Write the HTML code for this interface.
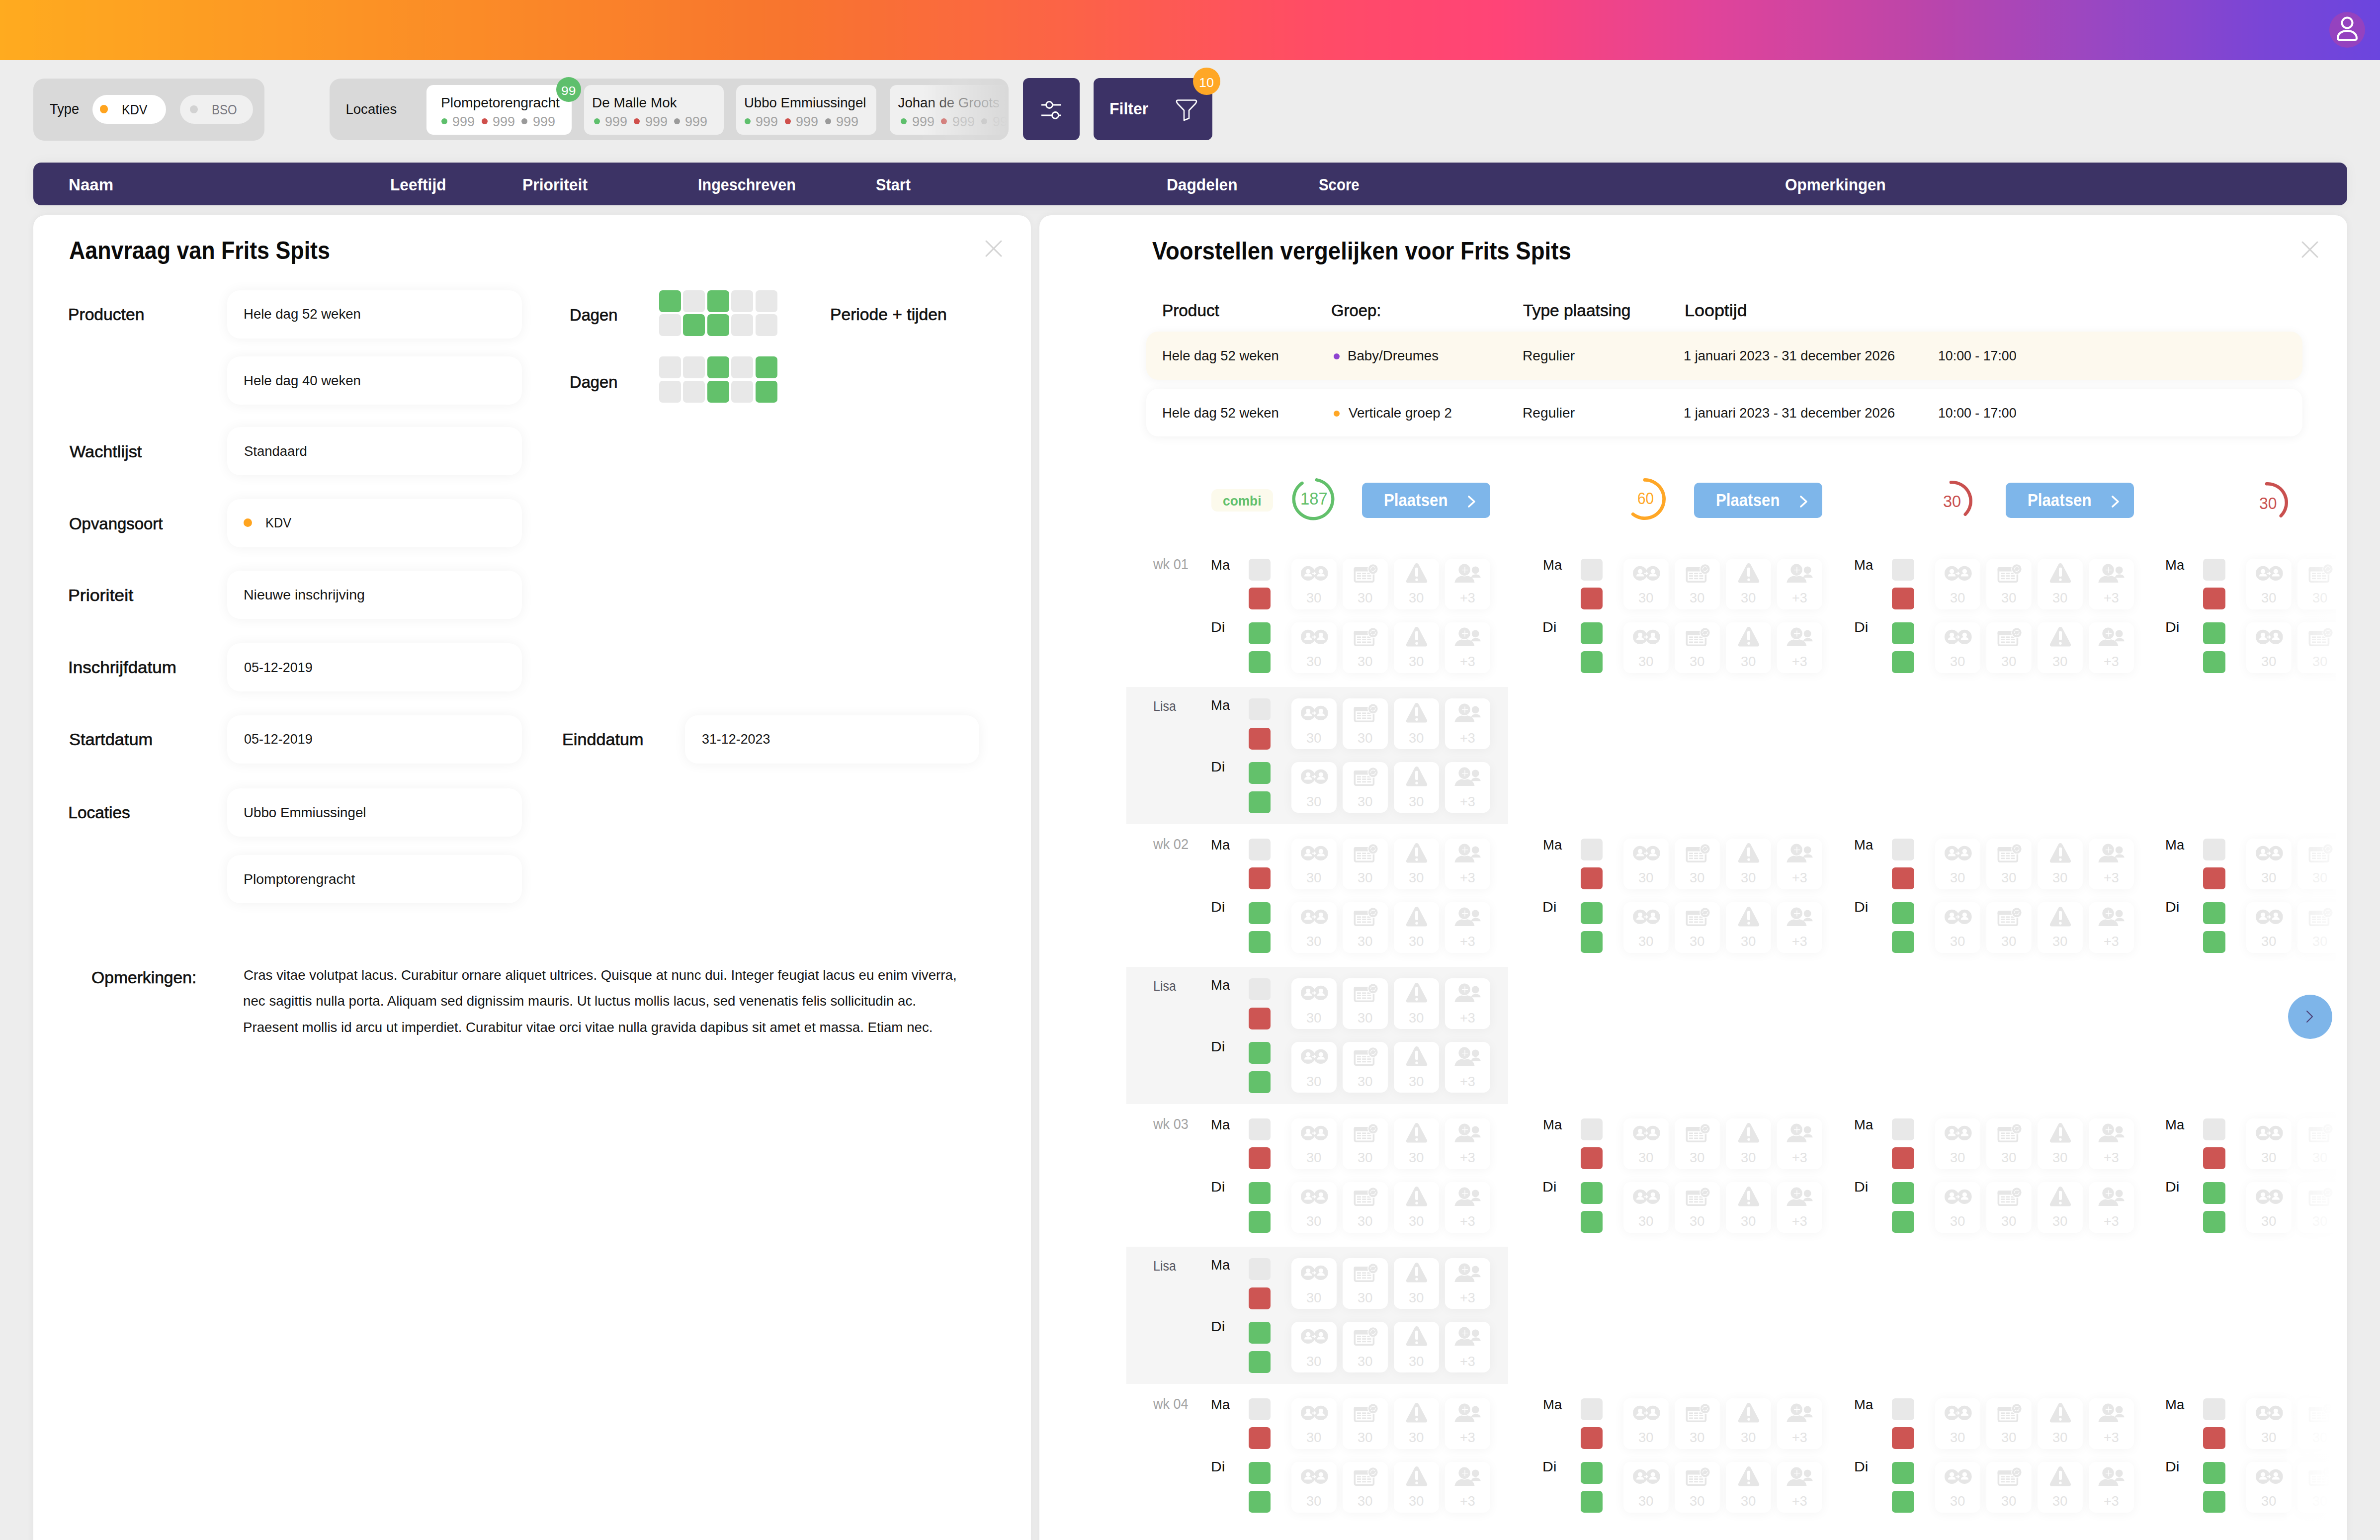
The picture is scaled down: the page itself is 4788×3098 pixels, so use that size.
<!DOCTYPE html><html><head><meta charset="utf-8"><style>
html,body{margin:0;padding:0;}
body{width:4788px;height:3098px;position:relative;overflow:hidden;background:#EDEDED;font-family:"Liberation Sans",sans-serif;}
.t{position:absolute;white-space:nowrap;transform-origin:0 0;}
.b{position:absolute;}
svg{position:absolute;overflow:visible;}
</style></head><body>
<div class="b" style="left:0.0px;top:0.0px;width:4788.0px;height:121.0px;background:linear-gradient(90deg,#FFAB1F 0%,#FB8B27 20%,#F8752E 33%,#FC6347 45%,#FF4C65 55%,#FF4477 63%,#E0449A 72%,#BF45A8 80%,#9A47C2 88%,#7A45D6 95%,#6B45DE 100%);border-radius:0px;"></div>
<div class="b" style="left:4686.0px;top:24.0px;width:72.0px;height:72.0px;background:#9542BF;border-radius:36.0px;"></div>
<svg style="left:4698px;top:30px" width="48" height="56" viewBox="0 0 48 56"><circle cx="24" cy="16" r="10.5" fill="none" stroke="#fff" stroke-width="4"/><path d="M5,47 C5,37 14,32 24,32 C34,32 43,37 43,47 C43,49 42,50 40,50 L8,50 C6,50 5,49 5,47 Z" fill="none" stroke="#fff" stroke-width="4"/></svg>
<div class="b" style="left:67.0px;top:158.0px;width:465.0px;height:125.0px;background:#D9D9D9;border-radius:22px;"></div>
<div class="t" style="left:100.2px;top:205.4px;font-size:29.07px;line-height:29.07px;color:#111;transform:scaleX(0.9380);">Type</div>
<div class="b" style="left:186.0px;top:190.5px;width:148.0px;height:58.5px;background:#FFFFFF;border-radius:30px;"></div>
<div class="b" style="left:200.8px;top:211.2px;width:16.5px;height:16.5px;background:#FFA41F;border-radius:8.25px;"></div>
<div class="t" style="left:245.0px;top:205.8px;font-size:28.34px;line-height:28.34px;color:#111;transform:scaleX(0.8843);">KDV</div>
<div class="b" style="left:362.0px;top:190.5px;width:147.0px;height:58.5px;background:#F0F0F0;border-radius:30px;"></div>
<div class="b" style="left:382.0px;top:211.5px;width:16.0px;height:16.0px;background:#D2D2D2;border-radius:8.0px;"></div>
<div class="t" style="left:426.1px;top:205.8px;font-size:28.34px;line-height:28.34px;color:#77777F;transform:scaleX(0.8443);">BSO</div>
<div class="b" style="left:663px;top:157.5px;width:1366px;height:124.5px;background:#D9D9D9;border-radius:22px;overflow:hidden">
<div class="b" style="left:195.0px;top:13.5px;width:292.0px;height:100.0px;background:#FFFFFF;border-radius:14px;"></div>
<div class="t" style="left:224.1px;top:35.1px;font-size:27.62px;line-height:27.62px;color:#111;transform:scaleX(1.0244);">Plompetorengracht</div>
<div class="b" style="left:224.6px;top:80.0px;width:12.0px;height:12.0px;background:#5EBF6C;border-radius:6.0px;"></div>
<div class="t" style="left:247.4px;top:73.1px;font-size:27.62px;line-height:27.62px;color:#A3A3A3;transform:scaleX(0.9748);">999</div>
<div class="b" style="left:305.6px;top:80.0px;width:12.0px;height:12.0px;background:#CF4F4B;border-radius:6.0px;"></div>
<div class="t" style="left:328.4px;top:73.1px;font-size:27.62px;line-height:27.62px;color:#A3A3A3;transform:scaleX(0.9748);">999</div>
<div class="b" style="left:386.3px;top:80.0px;width:12.0px;height:12.0px;background:#9A9A9A;border-radius:6.0px;"></div>
<div class="t" style="left:409.1px;top:73.1px;font-size:27.62px;line-height:27.62px;color:#A3A3A3;transform:scaleX(0.9748);">999</div>
<div class="b" style="left:512.0px;top:13.5px;width:281.0px;height:100.0px;background:#F0F0F0;border-radius:14px;"></div>
<div class="t" style="left:527.8px;top:35.1px;font-size:27.62px;line-height:27.62px;color:#111;transform:scaleX(1.0110);">De Malle Mok</div>
<div class="b" style="left:531.5px;top:80.0px;width:12.0px;height:12.0px;background:#5EBF6C;border-radius:6.0px;"></div>
<div class="t" style="left:554.3px;top:73.1px;font-size:27.62px;line-height:27.62px;color:#A3A3A3;transform:scaleX(0.9748);">999</div>
<div class="b" style="left:612.0px;top:80.0px;width:12.0px;height:12.0px;background:#CF4F4B;border-radius:6.0px;"></div>
<div class="t" style="left:634.8px;top:73.1px;font-size:27.62px;line-height:27.62px;color:#A3A3A3;transform:scaleX(0.9748);">999</div>
<div class="b" style="left:692.6px;top:80.0px;width:12.0px;height:12.0px;background:#9A9A9A;border-radius:6.0px;"></div>
<div class="t" style="left:715.4px;top:73.1px;font-size:27.62px;line-height:27.62px;color:#A3A3A3;transform:scaleX(0.9748);">999</div>
<div class="b" style="left:818.0px;top:13.5px;width:281.5px;height:100.0px;background:#F0F0F0;border-radius:14px;"></div>
<div class="t" style="left:833.9px;top:35.1px;font-size:27.62px;line-height:27.62px;color:#111;">Ubbo Emmiussingel</div>
<div class="b" style="left:834.6px;top:80.0px;width:12.0px;height:12.0px;background:#5EBF6C;border-radius:6.0px;"></div>
<div class="t" style="left:857.4px;top:73.1px;font-size:27.62px;line-height:27.62px;color:#A3A3A3;transform:scaleX(0.9748);">999</div>
<div class="b" style="left:915.5px;top:80.0px;width:12.0px;height:12.0px;background:#CF4F4B;border-radius:6.0px;"></div>
<div class="t" style="left:938.3px;top:73.1px;font-size:27.62px;line-height:27.62px;color:#A3A3A3;transform:scaleX(0.9748);">999</div>
<div class="b" style="left:996.5px;top:80.0px;width:12.0px;height:12.0px;background:#9A9A9A;border-radius:6.0px;"></div>
<div class="t" style="left:1019.3px;top:73.1px;font-size:27.62px;line-height:27.62px;color:#A3A3A3;transform:scaleX(0.9748);">999</div>
<div class="b" style="left:1127.0px;top:13.5px;width:281.0px;height:100.0px;background:#F0F0F0;border-radius:14px;"></div>
<div class="t" style="left:1143.6px;top:35.1px;font-size:27.62px;line-height:27.62px;color:#111;">Johan de Groots</div>
<div class="b" style="left:1149.0px;top:80.0px;width:12.0px;height:12.0px;background:#5EBF6C;border-radius:6.0px;"></div>
<div class="t" style="left:1171.8px;top:73.1px;font-size:27.62px;line-height:27.62px;color:#A3A3A3;transform:scaleX(0.9748);">999</div>
<div class="b" style="left:1230.0px;top:80.0px;width:12.0px;height:12.0px;background:#CF4F4B;border-radius:6.0px;"></div>
<div class="t" style="left:1252.8px;top:73.1px;font-size:27.62px;line-height:27.62px;color:#A3A3A3;transform:scaleX(0.9748);">999</div>
<div class="b" style="left:1311.0px;top:80.0px;width:12.0px;height:12.0px;background:#9A9A9A;border-radius:6.0px;"></div>
<div class="t" style="left:1333.8px;top:73.1px;font-size:27.62px;line-height:27.62px;color:#A3A3A3;transform:scaleX(0.9748);">999</div>
<div class="b" style="left:1190px;top:0;width:176px;height:124.5px;background:linear-gradient(90deg,rgba(222,222,222,0) 0%,rgba(222,222,222,0.6) 45%,rgba(217,217,217,0.9) 88%,rgba(217,217,217,1) 100%)"></div>
</div>
<div class="t" style="left:695.4px;top:206.0px;font-size:27.62px;line-height:27.62px;color:#111;">Locaties</div>
<div class="b" style="left:1119.0px;top:154.5px;width:50.0px;height:50.0px;background:#5EBF6C;border-radius:25.0px;"></div>
<div class="t" style="left:1129.3px;top:170.6px;font-size:24.71px;line-height:24.71px;color:#FFFFFF;transform:scaleX(1.0713);">99</div>
<div class="b" style="left:2057.6px;top:157.4px;width:114.2px;height:125.0px;background:#3C3266;border-radius:12px;"></div>
<svg style="left:2090px;top:200px" width="50" height="42" viewBox="0 0 50 42"><g fill="none" stroke="#fff" stroke-width="2.8"><line x1="5" y1="11" x2="45" y2="11"/><line x1="5" y1="32" x2="45" y2="32"/><circle cx="21" cy="11" r="6.5" fill="#3C3266"/><circle cx="33" cy="32" r="6.5" fill="#3C3266"/></g></svg>
<div class="b" style="left:2199.7px;top:157.0px;width:239.1px;height:125.0px;background:#3C3266;border-radius:12px;"></div>
<div class="t" style="left:2231.9px;top:201.7px;font-size:33.43px;line-height:33.43px;color:#FFFFFF;font-weight:700;transform:scaleX(0.9562);">Filter</div>
<svg style="left:2362px;top:198px" width="50" height="48" viewBox="0 0 50 48"><path d="M5,6 C5,4 6,3.5 8,3.5 L42,3.5 C44,3.5 45,4 45,6 C45,8 44,9 43,10.5 L30,24 L30,40 L20,44 L20,24 L7,10.5 C6,9 5,8 5,6 Z" fill="none" stroke="#fff" stroke-width="2.6" stroke-linejoin="round"/></svg>
<div class="b" style="left:2400.1px;top:135.5px;width:55.0px;height:55.0px;background:#FFA726;border-radius:27.5px;"></div>
<div class="t" style="left:2412.0px;top:152.8px;font-size:26.16px;line-height:26.16px;color:#FFFFFF;transform:scaleX(1.0320);">10</div>
<div class="b" style="left:67.0px;top:327.0px;width:4655.0px;height:86.0px;background:#3C3365;border-radius:16px;box-shadow:0 0 24px rgba(0,0,0,0.05);"></div>
<div class="t" style="left:138.3px;top:354.7px;font-size:33.43px;line-height:33.43px;color:#FFFFFF;font-weight:700;transform:scaleX(0.9894);">Naam</div>
<div class="t" style="left:784.6px;top:354.7px;font-size:33.43px;line-height:33.43px;color:#FFFFFF;font-weight:700;transform:scaleX(0.9467);">Leeftijd</div>
<div class="t" style="left:1050.9px;top:354.7px;font-size:33.43px;line-height:33.43px;color:#FFFFFF;font-weight:700;transform:scaleX(0.9534);">Prioriteit</div>
<div class="t" style="left:1404.0px;top:354.7px;font-size:33.43px;line-height:33.43px;color:#FFFFFF;font-weight:700;transform:scaleX(0.9135);">Ingeschreven</div>
<div class="t" style="left:1761.6px;top:354.7px;font-size:33.43px;line-height:33.43px;color:#FFFFFF;font-weight:700;transform:scaleX(0.9181);">Start</div>
<div class="t" style="left:2346.9px;top:354.7px;font-size:33.43px;line-height:33.43px;color:#FFFFFF;font-weight:700;transform:scaleX(0.9476);">Dagdelen</div>
<div class="t" style="left:2653.1px;top:354.7px;font-size:33.43px;line-height:33.43px;color:#FFFFFF;font-weight:700;transform:scaleX(0.8798);">Score</div>
<div class="t" style="left:3590.7px;top:354.7px;font-size:33.43px;line-height:33.43px;color:#FFFFFF;font-weight:700;transform:scaleX(0.9415);">Opmerkingen</div>
<div class="b" style="left:67.0px;top:433.0px;width:2007.0px;height:2867.0px;background:#FFFFFF;border-radius:24px;box-shadow:0 0 16px rgba(0,0,0,0.05);"></div>
<div class="b" style="left:2091.0px;top:433.0px;width:2631.0px;height:2867.0px;background:#FFFFFF;border-radius:24px;box-shadow:0 0 16px rgba(0,0,0,0.05);"></div>
<div class="t" style="left:138.7px;top:479.4px;font-size:50.29px;line-height:50.29px;color:#0A0A0A;font-weight:700;transform:scaleX(0.8902);">Aanvraag van Frits Spits</div>
<svg style="left:1981px;top:481.5px" width="36" height="36" viewBox="0 0 36 36"><path d="M3,3 L33,33 M33,3 L3,33" stroke="#D4D4D4" stroke-width="3" stroke-linecap="round"/></svg>
<div class="t" style="left:137.3px;top:616.4px;font-size:33.43px;line-height:33.43px;color:#111111;transform:scaleX(1.0064);-webkit-text-stroke:0.7px #111111;">Producten</div>
<div class="b" style="left:457.0px;top:583.5px;width:593.0px;height:97.0px;background:#FFFFFF;border-radius:26px;box-shadow:0 1px 26px rgba(0,0,0,0.055);"></div>
<div class="t" style="left:489.8px;top:619.1px;font-size:26.74px;line-height:26.74px;color:#151515;transform:scaleX(1.0303);">Hele dag 52 weken</div>
<div class="b" style="left:457.0px;top:717.0px;width:593.0px;height:97.0px;background:#FFFFFF;border-radius:26px;box-shadow:0 1px 26px rgba(0,0,0,0.055);"></div>
<div class="t" style="left:489.8px;top:752.6px;font-size:26.74px;line-height:26.74px;color:#151515;transform:scaleX(1.0303);">Hele dag 40 weken</div>
<div class="t" style="left:1146.4px;top:616.7px;font-size:33.43px;line-height:33.43px;color:#111111;transform:scaleX(0.9790);-webkit-text-stroke:0.7px #111111;">Dagen</div>
<div class="t" style="left:1146.4px;top:751.7px;font-size:33.43px;line-height:33.43px;color:#111111;transform:scaleX(0.9790);-webkit-text-stroke:0.7px #111111;">Dagen</div>
<div class="b" style="left:1325.6px;top:583.5px;width:44.0px;height:44.0px;background:#63C16B;border-radius:7px;"></div>
<div class="b" style="left:1374.1px;top:583.5px;width:44.0px;height:44.0px;background:#E8E8E8;border-radius:7px;"></div>
<div class="b" style="left:1422.6px;top:583.5px;width:44.0px;height:44.0px;background:#63C16B;border-radius:7px;"></div>
<div class="b" style="left:1471.1px;top:583.5px;width:44.0px;height:44.0px;background:#E8E8E8;border-radius:7px;"></div>
<div class="b" style="left:1519.6px;top:583.5px;width:44.0px;height:44.0px;background:#E8E8E8;border-radius:7px;"></div>
<div class="b" style="left:1325.6px;top:632.0px;width:44.0px;height:44.0px;background:#E8E8E8;border-radius:7px;"></div>
<div class="b" style="left:1374.1px;top:632.0px;width:44.0px;height:44.0px;background:#63C16B;border-radius:7px;"></div>
<div class="b" style="left:1422.6px;top:632.0px;width:44.0px;height:44.0px;background:#63C16B;border-radius:7px;"></div>
<div class="b" style="left:1471.1px;top:632.0px;width:44.0px;height:44.0px;background:#E8E8E8;border-radius:7px;"></div>
<div class="b" style="left:1519.6px;top:632.0px;width:44.0px;height:44.0px;background:#E8E8E8;border-radius:7px;"></div>
<div class="b" style="left:1325.6px;top:717.4px;width:44.0px;height:44.0px;background:#E8E8E8;border-radius:7px;"></div>
<div class="b" style="left:1374.1px;top:717.4px;width:44.0px;height:44.0px;background:#E8E8E8;border-radius:7px;"></div>
<div class="b" style="left:1422.6px;top:717.4px;width:44.0px;height:44.0px;background:#63C16B;border-radius:7px;"></div>
<div class="b" style="left:1471.1px;top:717.4px;width:44.0px;height:44.0px;background:#E8E8E8;border-radius:7px;"></div>
<div class="b" style="left:1519.6px;top:717.4px;width:44.0px;height:44.0px;background:#63C16B;border-radius:7px;"></div>
<div class="b" style="left:1325.6px;top:765.9px;width:44.0px;height:44.0px;background:#E8E8E8;border-radius:7px;"></div>
<div class="b" style="left:1374.1px;top:765.9px;width:44.0px;height:44.0px;background:#E8E8E8;border-radius:7px;"></div>
<div class="b" style="left:1422.6px;top:765.9px;width:44.0px;height:44.0px;background:#63C16B;border-radius:7px;"></div>
<div class="b" style="left:1471.1px;top:765.9px;width:44.0px;height:44.0px;background:#E8E8E8;border-radius:7px;"></div>
<div class="b" style="left:1519.6px;top:765.9px;width:44.0px;height:44.0px;background:#63C16B;border-radius:7px;"></div>
<div class="t" style="left:1669.9px;top:616.4px;font-size:33.43px;line-height:33.43px;color:#111111;transform:scaleX(1.0066);-webkit-text-stroke:0.7px #111111;">Periode + tijden</div>
<div class="t" style="left:139.8px;top:892.1px;font-size:33.43px;line-height:33.43px;color:#111111;transform:scaleX(1.0254);-webkit-text-stroke:0.7px #111111;">Wachtlijst</div>
<div class="b" style="left:457.0px;top:859.0px;width:593.0px;height:97.0px;background:#FFFFFF;border-radius:26px;box-shadow:0 1px 26px rgba(0,0,0,0.055);"></div>
<div class="t" style="left:490.8px;top:894.6px;font-size:26.74px;line-height:26.74px;color:#151515;transform:scaleX(1.0281);">Standaard</div>
<div class="t" style="left:138.5px;top:1036.7px;font-size:33.43px;line-height:33.43px;color:#111111;transform:scaleX(0.9846);-webkit-text-stroke:0.7px #111111;">Opvangsoort</div>
<div class="b" style="left:457.0px;top:1003.6px;width:593.0px;height:97.0px;background:#FFFFFF;border-radius:26px;box-shadow:0 1px 26px rgba(0,0,0,0.055);"></div>
<div class="b" style="left:490.2px;top:1042.5px;width:17.0px;height:17.0px;background:#FFA41F;border-radius:8.5px;"></div>
<div class="t" style="left:534.0px;top:1039.4px;font-size:26.74px;line-height:26.74px;color:#151515;transform:scaleX(0.9466);">KDV</div>
<div class="t" style="left:137.1px;top:1181.2px;font-size:33.43px;line-height:33.43px;color:#111111;transform:scaleX(1.0695);-webkit-text-stroke:0.7px #111111;">Prioriteit</div>
<div class="b" style="left:457.0px;top:1148.0px;width:593.0px;height:97.0px;background:#FFFFFF;border-radius:26px;box-shadow:0 1px 26px rgba(0,0,0,0.055);"></div>
<div class="t" style="left:489.7px;top:1183.6px;font-size:26.74px;line-height:26.74px;color:#151515;transform:scaleX(1.0658);">Nieuwe inschrijving</div>
<div class="t" style="left:136.8px;top:1326.2px;font-size:33.43px;line-height:33.43px;color:#111111;transform:scaleX(1.0477);-webkit-text-stroke:0.7px #111111;">Inschrijfdatum</div>
<div class="b" style="left:457.0px;top:1294.0px;width:593.0px;height:97.0px;background:#FFFFFF;border-radius:26px;box-shadow:0 1px 26px rgba(0,0,0,0.055);"></div>
<div class="t" style="left:490.9px;top:1329.6px;font-size:26.74px;line-height:26.74px;color:#151515;transform:scaleX(1.0065);">05-12-2019</div>
<div class="t" style="left:138.5px;top:1470.7px;font-size:33.43px;line-height:33.43px;color:#111111;transform:scaleX(1.0290);-webkit-text-stroke:0.7px #111111;">Startdatum</div>
<div class="b" style="left:457.0px;top:1438.6px;width:593.0px;height:97.0px;background:#FFFFFF;border-radius:26px;box-shadow:0 1px 26px rgba(0,0,0,0.055);"></div>
<div class="t" style="left:490.9px;top:1474.2px;font-size:26.74px;line-height:26.74px;color:#151515;transform:scaleX(1.0065);">05-12-2019</div>
<div class="t" style="left:1131.3px;top:1470.7px;font-size:33.43px;line-height:33.43px;color:#111111;transform:scaleX(1.0225);-webkit-text-stroke:0.7px #111111;">Einddatum</div>
<div class="b" style="left:1378.0px;top:1438.6px;width:592.0px;height:97.0px;background:#FFFFFF;border-radius:26px;box-shadow:0 1px 26px rgba(0,0,0,0.055);"></div>
<div class="t" style="left:1412.1px;top:1474.2px;font-size:26.74px;line-height:26.74px;color:#151515;transform:scaleX(1.0045);">31-12-2023</div>
<div class="t" style="left:137.3px;top:1617.7px;font-size:33.43px;line-height:33.43px;color:#111111;-webkit-text-stroke:0.7px #111111;">Locaties</div>
<div class="b" style="left:457.0px;top:1586.0px;width:593.0px;height:97.0px;background:#FFFFFF;border-radius:26px;box-shadow:0 1px 26px rgba(0,0,0,0.055);"></div>
<div class="t" style="left:489.9px;top:1621.6px;font-size:26.74px;line-height:26.74px;color:#151515;transform:scaleX(1.0367);">Ubbo Emmiussingel</div>
<div class="b" style="left:457.0px;top:1720.0px;width:593.0px;height:97.0px;background:#FFFFFF;border-radius:26px;box-shadow:0 1px 26px rgba(0,0,0,0.055);"></div>
<div class="t" style="left:489.7px;top:1755.6px;font-size:26.74px;line-height:26.74px;color:#151515;transform:scaleX(1.0635);">Plomptorengracht</div>
<div class="t" style="left:183.5px;top:1949.6px;font-size:33.43px;line-height:33.43px;color:#111111;transform:scaleX(1.0068);-webkit-text-stroke:0.7px #111111;">Opmerkingen:</div>
<div class="t" style="left:489.6px;top:1946.6px;font-size:28.49px;line-height:28.49px;color:#151515;transform:scaleX(0.9722);">Cras vitae volutpat lacus. Curabitur ornare aliquet ultrices. Quisque at nunc dui. Integer feugiat lacus eu enim viverra,</div>
<div class="t" style="left:489.2px;top:1998.9px;font-size:28.49px;line-height:28.49px;color:#151515;transform:scaleX(0.9730);">nec sagittis nulla porta. Aliquam sed dignissim mauris. Ut luctus mollis lacus, sed venenatis felis sollicitudin ac.</div>
<div class="t" style="left:488.8px;top:2051.6px;font-size:28.49px;line-height:28.49px;color:#151515;transform:scaleX(0.9727);">Praesent mollis id arcu ut imperdiet. Curabitur vitae orci vitae nulla gravida dapibus sit amet et massa. Etiam nec.</div>
<div class="t" style="left:2317.7px;top:480.4px;font-size:50.29px;line-height:50.29px;color:#0A0A0A;font-weight:700;transform:scaleX(0.9067);">Voorstellen vergelijken voor Frits Spits</div>
<svg style="left:4629px;top:484px" width="36" height="36" viewBox="0 0 36 36"><path d="M3,3 L33,33 M33,3 L3,33" stroke="#D4D4D4" stroke-width="3" stroke-linecap="round"/></svg>
<div class="t" style="left:2337.6px;top:608.6px;font-size:32.41px;line-height:32.41px;color:#111111;transform:scaleX(1.0284);-webkit-text-stroke:0.6px #111111;">Product</div>
<div class="t" style="left:2678.1px;top:608.6px;font-size:32.41px;line-height:32.41px;color:#111111;transform:scaleX(1.0122);-webkit-text-stroke:0.6px #111111;">Groep:</div>
<div class="t" style="left:3064.3px;top:608.6px;font-size:32.41px;line-height:32.41px;color:#111111;transform:scaleX(1.0360);-webkit-text-stroke:0.6px #111111;">Type plaatsing</div>
<div class="t" style="left:3389.1px;top:608.6px;font-size:32.41px;line-height:32.41px;color:#111111;transform:scaleX(1.1074);-webkit-text-stroke:0.6px #111111;">Looptijd</div>
<div class="b" style="left:2305.8px;top:667.0px;width:2326.2px;height:96.6px;background:#FDF9EE;border-radius:24px;box-shadow:0 2px 20px rgba(0,0,0,0.05);"></div>
<div class="b" style="left:2305.8px;top:781.5px;width:2326.2px;height:96.8px;background:#FFFFFF;border-radius:24px;box-shadow:0 2px 20px rgba(0,0,0,0.06);"></div>
<div class="t" style="left:2337.8px;top:702.3px;font-size:27.62px;line-height:27.62px;color:#151515;transform:scaleX(0.9930);">Hele dag 52 weken</div>
<div class="b" style="left:2683.4px;top:711.2px;width:12.0px;height:12.0px;background:#8E44D0;border-radius:6.0px;"></div>
<div class="t" style="left:2711.3px;top:702.3px;font-size:27.62px;line-height:27.62px;color:#151515;transform:scaleX(1.0022);">Baby/Dreumes</div>
<div class="t" style="left:3062.7px;top:702.3px;font-size:27.62px;line-height:27.62px;color:#151515;transform:scaleX(1.0215);">Regulier</div>
<div class="t" style="left:3386.5px;top:702.3px;font-size:27.62px;line-height:27.62px;color:#151515;transform:scaleX(0.9891);">1 januari 2023 - 31 december 2026</div>
<div class="t" style="left:3898.5px;top:702.3px;font-size:27.62px;line-height:27.62px;color:#151515;transform:scaleX(0.9683);">10:00 - 17:00</div>
<div class="t" style="left:2337.8px;top:816.6px;font-size:27.62px;line-height:27.62px;color:#151515;transform:scaleX(0.9930);">Hele dag 52 weken</div>
<div class="b" style="left:2683.4px;top:825.5px;width:12.0px;height:12.0px;background:#FFA726;border-radius:6.0px;"></div>
<div class="t" style="left:2713.4px;top:816.6px;font-size:27.62px;line-height:27.62px;color:#151515;transform:scaleX(1.0032);">Verticale groep 2</div>
<div class="t" style="left:3062.7px;top:816.6px;font-size:27.62px;line-height:27.62px;color:#151515;transform:scaleX(1.0215);">Regulier</div>
<div class="t" style="left:3386.5px;top:816.6px;font-size:27.62px;line-height:27.62px;color:#151515;transform:scaleX(0.9891);">1 januari 2023 - 31 december 2026</div>
<div class="t" style="left:3898.5px;top:816.6px;font-size:27.62px;line-height:27.62px;color:#151515;transform:scaleX(0.9683);">10:00 - 17:00</div>
<div class="b" style="left:2436.5px;top:984.4px;width:124.5px;height:44.2px;background:#FCFAEC;border-radius:12px;"></div>
<div class="t" style="left:2460.3px;top:992.5px;font-size:28.38px;line-height:28.38px;color:#62C06B;font-weight:700;transform:scaleX(0.9273);">combi</div>
<svg style="left:2582.2px;top:943.5px" width="120" height="120" viewBox="2582.2 943.5 120 120"><path d="M2649.02,964.85 A39.25,39.25 0 1 1 2619.69,971.35" fill="none" stroke="#62C06B" stroke-width="6.5" stroke-linecap="round"/></svg>
<div class="t" style="left:2616.3px;top:985.8px;font-size:34.16px;line-height:34.16px;color:#62C06B;transform:scaleX(0.9619);">187</div>
<svg style="left:3249.4px;top:943.5px" width="120" height="120" viewBox="3249.4 943.5 120 120"><path d="M3309.40,964.90 A38.60,38.60 0 1 1 3285.64,1033.92" fill="none" stroke="#FFA726" stroke-width="6.8" stroke-linecap="round"/></svg>
<div class="t" style="left:3293.8px;top:985.9px;font-size:33.72px;line-height:33.72px;color:#FFA726;transform:scaleX(0.8824);">60</div>
<svg style="left:3867.0px;top:947.5px" width="120" height="120" viewBox="3867.0 947.5 120 120"><path d="M3925.02,969.80 A37.75,37.75 0 0 1 3953.69,1034.19" fill="none" stroke="#C9504F" stroke-width="6.5" stroke-linecap="round"/></svg>
<div class="t" style="left:3909.4px;top:991.4px;font-size:34.01px;line-height:34.01px;color:#C9504F;transform:scaleX(0.9556);">30</div>
<svg style="left:4502.0px;top:950.5px" width="120" height="120" viewBox="4502.0 950.5 120 120"><path d="M4560.02,972.80 A37.75,37.75 0 0 1 4588.69,1037.19" fill="none" stroke="#C9504F" stroke-width="6.5" stroke-linecap="round"/></svg>
<div class="t" style="left:4544.5px;top:995.2px;font-size:34.01px;line-height:34.01px;color:#C9504F;transform:scaleX(0.9414);">30</div>
<div class="b" style="left:2739.8px;top:970.6px;width:258.4px;height:71.4px;background:#7EB6EA;border-radius:10px;"></div>
<div class="t" style="left:2783.7px;top:988.7px;font-size:34.16px;line-height:34.16px;color:#FFFFFF;font-weight:700;transform:scaleX(0.9143);">Plaatsen</div>
<svg style="left:2949.8px;top:994px" width="24" height="30" viewBox="0 0 24 30"><path d="M5,5 L16,15 L5,25" fill="none" stroke="#fff" stroke-width="3.6" stroke-linecap="round" stroke-linejoin="round"/></svg>
<div class="b" style="left:3407.8px;top:970.6px;width:258.4px;height:71.4px;background:#7EB6EA;border-radius:10px;"></div>
<div class="t" style="left:3451.7px;top:988.7px;font-size:34.16px;line-height:34.16px;color:#FFFFFF;font-weight:700;transform:scaleX(0.9143);">Plaatsen</div>
<svg style="left:3617.8px;top:994px" width="24" height="30" viewBox="0 0 24 30"><path d="M5,5 L16,15 L5,25" fill="none" stroke="#fff" stroke-width="3.6" stroke-linecap="round" stroke-linejoin="round"/></svg>
<div class="b" style="left:4034.7px;top:970.6px;width:258.4px;height:71.4px;background:#7EB6EA;border-radius:10px;"></div>
<div class="t" style="left:4078.6px;top:988.7px;font-size:34.16px;line-height:34.16px;color:#FFFFFF;font-weight:700;transform:scaleX(0.9143);">Plaatsen</div>
<svg style="left:4244.7px;top:994px" width="24" height="30" viewBox="0 0 24 30"><path d="M5,5 L16,15 L5,25" fill="none" stroke="#fff" stroke-width="3.6" stroke-linecap="round" stroke-linejoin="round"/></svg>
<svg width="0" height="0" style="left:0;top:0"><defs>
<symbol id="i1" viewBox="0 0 91.4 102">
 <circle cx="33.6" cy="29.4" r="14.6" fill="#E6E6E6"/><circle cx="59.1" cy="29.4" r="14.6" fill="#E6E6E6"/>
 <circle cx="33.6" cy="25.3" r="4.6" fill="#fff"/><path d="M26,35.4 C26,31.5 29,29.8 33.6,29.8 C38.2,29.8 41.2,31.5 41.2,35.4 Z" fill="#fff"/>
 <circle cx="59.4" cy="25.3" r="4.6" fill="#fff"/><path d="M51.8,35.4 C51.8,31.5 54.8,29.8 59.4,29.8 C64,29.8 67,31.5 67,35.4 Z" fill="#fff"/>
 <path d="M41.5,29.5 L47.5,29.5 M45.3,26.3 L48.5,29.5 L45.3,32.7" stroke="#fff" stroke-width="1.8" fill="none"/>
</symbol>
<symbol id="i2" viewBox="0 0 91.4 102">
 <rect x="24.4" y="18.9" width="38" height="27.4" rx="3" fill="none" stroke="#E6E6E6" stroke-width="3.6"/>
 <rect x="22.6" y="17.1" width="41.6" height="8.5" rx="3" fill="#E6E6E6"/>
 <g fill="#E6E6E6"><rect x="29" y="28.4" width="8" height="2.7"/><rect x="39.2" y="28.4" width="8" height="2.7"/><rect x="49.4" y="28.4" width="8" height="2.7"/>
 <rect x="29" y="33.2" width="8" height="2.7"/><rect x="39.2" y="33.2" width="8" height="2.7"/><rect x="49.4" y="33.2" width="8" height="2.7"/>
 <rect x="29" y="38.5" width="8" height="2.7"/><rect x="39.2" y="38.5" width="8" height="2.7"/><rect x="49.4" y="38.5" width="8" height="2.7"/></g>
 <circle cx="61.2" cy="20.7" r="10.2" fill="#E6E6E6" stroke="#fff" stroke-width="1.5"/>
 <path d="M56.5,21.5 A5,5 0 0 1 65,17.5 M65.9,19.9 A5,5 0 0 1 57.4,23.9" fill="none" stroke="#fff" stroke-width="1.3"/>
</symbol>
<symbol id="i3" viewBox="0 0 91.4 102">
 <path d="M46,9 C48,9 49.2,10.2 50.2,12 L66.5,43 C68.2,46.3 66.6,48.6 63,48.6 L29,48.6 C25.4,48.6 23.8,46.3 25.5,43 L41.8,12 C42.8,10.2 44,9 46,9 Z" fill="#E6E6E6"/>
 <rect x="43" y="17.8" width="6" height="18.2" rx="2" fill="#fff"/><circle cx="46" cy="42.2" r="2.7" fill="#fff"/>
</symbol>
<symbol id="i4" viewBox="0 0 91.4 102">
 <circle cx="61.2" cy="22.8" r="7.4" fill="#E6E6E6"/><path d="M52.5,38.2 C53.5,33.5 57,31.5 62,31.5 C67,31.5 70.8,33.5 71.8,38.2 Z" fill="#E6E6E6"/>
 <path d="M19.4,48.1 C20.8,38.5 29,33.7 39.5,33.7 C50,33.7 58.2,38.5 59.5,48.1 Z" fill="#E6E6E6"/>
 <circle cx="39.1" cy="22.2" r="12.5" fill="#E6E6E6" stroke="#fff" stroke-width="1.6"/>
 <path d="M40,16.6 L40,28.6 M34,22.6 L46,22.6" stroke="#fff" stroke-width="1.4"/>
</symbol>
</defs></svg>
<div class="b" style="left:2091px;top:1050px;width:2609px;height:2100px;overflow:hidden">
<div class="t" style="left:229.0px;top:71.4px;font-size:29.07px;line-height:29.07px;color:#A3A3A3;transform:scaleX(0.9348);">wk 01</div>
<div class="t" style="left:344.8px;top:72.1px;font-size:28.20px;line-height:28.20px;color:#111;transform:scaleX(0.9746);">Ma</div>
<div class="t" style="left:344.6px;top:196.6px;font-size:28.20px;line-height:28.20px;color:#111;transform:scaleX(1.0706);">Di</div>
<div class="b" style="left:420.8px;top:73.5px;width:44.4px;height:44.4px;background:#E8E8E8;border-radius:7px;"></div>
<div class="b" style="left:420.8px;top:132.0px;width:44.4px;height:44.4px;background:#CD5553;border-radius:7px;"></div>
<div class="b" style="left:420.8px;top:201.5px;width:44.4px;height:44.4px;background:#63C16B;border-radius:7px;"></div>
<div class="b" style="left:420.8px;top:260.0px;width:44.4px;height:44.4px;background:#63C16B;border-radius:7px;"></div>
<div class="b" style="left:506.9px;top:73.5px;width:91.4px;height:102.0px;background:#FFFFFF;border-radius:14px;box-shadow:0 2px 22px rgba(0,0,0,0.045);"></div>
<svg style="left:506.9px;top:73.5px" width="91.4" height="102"><use href="#i1"/></svg>
<div class="t" style="left:537.4px;top:138.1px;font-size:28.20px;line-height:28.20px;color:#E3E3E3;transform:scaleX(0.9650);">30</div>
<div class="b" style="left:609.9px;top:73.5px;width:91.4px;height:102.0px;background:#FFFFFF;border-radius:14px;box-shadow:0 2px 22px rgba(0,0,0,0.045);"></div>
<svg style="left:609.9px;top:73.5px" width="91.4" height="102"><use href="#i2"/></svg>
<div class="t" style="left:640.4px;top:138.1px;font-size:28.20px;line-height:28.20px;color:#E3E3E3;transform:scaleX(0.9650);">30</div>
<div class="b" style="left:712.9px;top:73.5px;width:91.4px;height:102.0px;background:#FFFFFF;border-radius:14px;box-shadow:0 2px 22px rgba(0,0,0,0.045);"></div>
<svg style="left:712.9px;top:73.5px" width="91.4" height="102"><use href="#i3"/></svg>
<div class="t" style="left:743.4px;top:138.1px;font-size:28.20px;line-height:28.20px;color:#E3E3E3;transform:scaleX(0.9650);">30</div>
<div class="b" style="left:815.9px;top:73.5px;width:91.4px;height:102.0px;background:#FFFFFF;border-radius:14px;box-shadow:0 2px 22px rgba(0,0,0,0.045);"></div>
<svg style="left:815.9px;top:73.5px" width="91.4" height="102"><use href="#i4"/></svg>
<div class="t" style="left:846.1px;top:138.1px;font-size:28.20px;line-height:28.20px;color:#E3E3E3;transform:scaleX(0.9558);">+3</div>
<div class="b" style="left:506.9px;top:201.5px;width:91.4px;height:102.0px;background:#FFFFFF;border-radius:14px;box-shadow:0 2px 22px rgba(0,0,0,0.045);"></div>
<svg style="left:506.9px;top:201.5px" width="91.4" height="102"><use href="#i1"/></svg>
<div class="t" style="left:537.4px;top:266.1px;font-size:28.20px;line-height:28.20px;color:#E3E3E3;transform:scaleX(0.9650);">30</div>
<div class="b" style="left:609.9px;top:201.5px;width:91.4px;height:102.0px;background:#FFFFFF;border-radius:14px;box-shadow:0 2px 22px rgba(0,0,0,0.045);"></div>
<svg style="left:609.9px;top:201.5px" width="91.4" height="102"><use href="#i2"/></svg>
<div class="t" style="left:640.4px;top:266.1px;font-size:28.20px;line-height:28.20px;color:#E3E3E3;transform:scaleX(0.9650);">30</div>
<div class="b" style="left:712.9px;top:201.5px;width:91.4px;height:102.0px;background:#FFFFFF;border-radius:14px;box-shadow:0 2px 22px rgba(0,0,0,0.045);"></div>
<svg style="left:712.9px;top:201.5px" width="91.4" height="102"><use href="#i3"/></svg>
<div class="t" style="left:743.4px;top:266.1px;font-size:28.20px;line-height:28.20px;color:#E3E3E3;transform:scaleX(0.9650);">30</div>
<div class="b" style="left:815.9px;top:201.5px;width:91.4px;height:102.0px;background:#FFFFFF;border-radius:14px;box-shadow:0 2px 22px rgba(0,0,0,0.045);"></div>
<svg style="left:815.9px;top:201.5px" width="91.4" height="102"><use href="#i4"/></svg>
<div class="t" style="left:846.1px;top:266.1px;font-size:28.20px;line-height:28.20px;color:#E3E3E3;transform:scaleX(0.9558);">+3</div>
<div class="t" style="left:1012.5px;top:72.1px;font-size:28.20px;line-height:28.20px;color:#111;transform:scaleX(0.9746);">Ma</div>
<div class="t" style="left:1012.3px;top:196.6px;font-size:28.20px;line-height:28.20px;color:#111;transform:scaleX(1.0706);">Di</div>
<div class="b" style="left:1088.5px;top:73.5px;width:44.4px;height:44.4px;background:#E8E8E8;border-radius:7px;"></div>
<div class="b" style="left:1088.5px;top:132.0px;width:44.4px;height:44.4px;background:#CD5553;border-radius:7px;"></div>
<div class="b" style="left:1088.5px;top:201.5px;width:44.4px;height:44.4px;background:#63C16B;border-radius:7px;"></div>
<div class="b" style="left:1088.5px;top:260.0px;width:44.4px;height:44.4px;background:#63C16B;border-radius:7px;"></div>
<div class="b" style="left:1174.6px;top:73.5px;width:91.4px;height:102.0px;background:#FFFFFF;border-radius:14px;box-shadow:0 2px 22px rgba(0,0,0,0.045);"></div>
<svg style="left:1174.6px;top:73.5px" width="91.4" height="102"><use href="#i1"/></svg>
<div class="t" style="left:1205.1px;top:138.1px;font-size:28.20px;line-height:28.20px;color:#E3E3E3;transform:scaleX(0.9650);">30</div>
<div class="b" style="left:1277.6px;top:73.5px;width:91.4px;height:102.0px;background:#FFFFFF;border-radius:14px;box-shadow:0 2px 22px rgba(0,0,0,0.045);"></div>
<svg style="left:1277.6px;top:73.5px" width="91.4" height="102"><use href="#i2"/></svg>
<div class="t" style="left:1308.1px;top:138.1px;font-size:28.20px;line-height:28.20px;color:#E3E3E3;transform:scaleX(0.9650);">30</div>
<div class="b" style="left:1380.6px;top:73.5px;width:91.4px;height:102.0px;background:#FFFFFF;border-radius:14px;box-shadow:0 2px 22px rgba(0,0,0,0.045);"></div>
<svg style="left:1380.6px;top:73.5px" width="91.4" height="102"><use href="#i3"/></svg>
<div class="t" style="left:1411.1px;top:138.1px;font-size:28.20px;line-height:28.20px;color:#E3E3E3;transform:scaleX(0.9650);">30</div>
<div class="b" style="left:1483.6px;top:73.5px;width:91.4px;height:102.0px;background:#FFFFFF;border-radius:14px;box-shadow:0 2px 22px rgba(0,0,0,0.045);"></div>
<svg style="left:1483.6px;top:73.5px" width="91.4" height="102"><use href="#i4"/></svg>
<div class="t" style="left:1513.8px;top:138.1px;font-size:28.20px;line-height:28.20px;color:#E3E3E3;transform:scaleX(0.9558);">+3</div>
<div class="b" style="left:1174.6px;top:201.5px;width:91.4px;height:102.0px;background:#FFFFFF;border-radius:14px;box-shadow:0 2px 22px rgba(0,0,0,0.045);"></div>
<svg style="left:1174.6px;top:201.5px" width="91.4" height="102"><use href="#i1"/></svg>
<div class="t" style="left:1205.1px;top:266.1px;font-size:28.20px;line-height:28.20px;color:#E3E3E3;transform:scaleX(0.9650);">30</div>
<div class="b" style="left:1277.6px;top:201.5px;width:91.4px;height:102.0px;background:#FFFFFF;border-radius:14px;box-shadow:0 2px 22px rgba(0,0,0,0.045);"></div>
<svg style="left:1277.6px;top:201.5px" width="91.4" height="102"><use href="#i2"/></svg>
<div class="t" style="left:1308.1px;top:266.1px;font-size:28.20px;line-height:28.20px;color:#E3E3E3;transform:scaleX(0.9650);">30</div>
<div class="b" style="left:1380.6px;top:201.5px;width:91.4px;height:102.0px;background:#FFFFFF;border-radius:14px;box-shadow:0 2px 22px rgba(0,0,0,0.045);"></div>
<svg style="left:1380.6px;top:201.5px" width="91.4" height="102"><use href="#i3"/></svg>
<div class="t" style="left:1411.1px;top:266.1px;font-size:28.20px;line-height:28.20px;color:#E3E3E3;transform:scaleX(0.9650);">30</div>
<div class="b" style="left:1483.6px;top:201.5px;width:91.4px;height:102.0px;background:#FFFFFF;border-radius:14px;box-shadow:0 2px 22px rgba(0,0,0,0.045);"></div>
<svg style="left:1483.6px;top:201.5px" width="91.4" height="102"><use href="#i4"/></svg>
<div class="t" style="left:1513.8px;top:266.1px;font-size:28.20px;line-height:28.20px;color:#E3E3E3;transform:scaleX(0.9558);">+3</div>
<div class="t" style="left:1639.4px;top:72.1px;font-size:28.20px;line-height:28.20px;color:#111;transform:scaleX(0.9746);">Ma</div>
<div class="t" style="left:1639.2px;top:196.6px;font-size:28.20px;line-height:28.20px;color:#111;transform:scaleX(1.0706);">Di</div>
<div class="b" style="left:1715.4px;top:73.5px;width:44.4px;height:44.4px;background:#E8E8E8;border-radius:7px;"></div>
<div class="b" style="left:1715.4px;top:132.0px;width:44.4px;height:44.4px;background:#CD5553;border-radius:7px;"></div>
<div class="b" style="left:1715.4px;top:201.5px;width:44.4px;height:44.4px;background:#63C16B;border-radius:7px;"></div>
<div class="b" style="left:1715.4px;top:260.0px;width:44.4px;height:44.4px;background:#63C16B;border-radius:7px;"></div>
<div class="b" style="left:1801.5px;top:73.5px;width:91.4px;height:102.0px;background:#FFFFFF;border-radius:14px;box-shadow:0 2px 22px rgba(0,0,0,0.045);"></div>
<svg style="left:1801.5px;top:73.5px" width="91.4" height="102"><use href="#i1"/></svg>
<div class="t" style="left:1832.0px;top:138.1px;font-size:28.20px;line-height:28.20px;color:#E3E3E3;transform:scaleX(0.9650);">30</div>
<div class="b" style="left:1904.5px;top:73.5px;width:91.4px;height:102.0px;background:#FFFFFF;border-radius:14px;box-shadow:0 2px 22px rgba(0,0,0,0.045);"></div>
<svg style="left:1904.5px;top:73.5px" width="91.4" height="102"><use href="#i2"/></svg>
<div class="t" style="left:1935.0px;top:138.1px;font-size:28.20px;line-height:28.20px;color:#E3E3E3;transform:scaleX(0.9650);">30</div>
<div class="b" style="left:2007.5px;top:73.5px;width:91.4px;height:102.0px;background:#FFFFFF;border-radius:14px;box-shadow:0 2px 22px rgba(0,0,0,0.045);"></div>
<svg style="left:2007.5px;top:73.5px" width="91.4" height="102"><use href="#i3"/></svg>
<div class="t" style="left:2038.0px;top:138.1px;font-size:28.20px;line-height:28.20px;color:#E3E3E3;transform:scaleX(0.9650);">30</div>
<div class="b" style="left:2110.5px;top:73.5px;width:91.4px;height:102.0px;background:#FFFFFF;border-radius:14px;box-shadow:0 2px 22px rgba(0,0,0,0.045);"></div>
<svg style="left:2110.5px;top:73.5px" width="91.4" height="102"><use href="#i4"/></svg>
<div class="t" style="left:2140.7px;top:138.1px;font-size:28.20px;line-height:28.20px;color:#E3E3E3;transform:scaleX(0.9558);">+3</div>
<div class="b" style="left:1801.5px;top:201.5px;width:91.4px;height:102.0px;background:#FFFFFF;border-radius:14px;box-shadow:0 2px 22px rgba(0,0,0,0.045);"></div>
<svg style="left:1801.5px;top:201.5px" width="91.4" height="102"><use href="#i1"/></svg>
<div class="t" style="left:1832.0px;top:266.1px;font-size:28.20px;line-height:28.20px;color:#E3E3E3;transform:scaleX(0.9650);">30</div>
<div class="b" style="left:1904.5px;top:201.5px;width:91.4px;height:102.0px;background:#FFFFFF;border-radius:14px;box-shadow:0 2px 22px rgba(0,0,0,0.045);"></div>
<svg style="left:1904.5px;top:201.5px" width="91.4" height="102"><use href="#i2"/></svg>
<div class="t" style="left:1935.0px;top:266.1px;font-size:28.20px;line-height:28.20px;color:#E3E3E3;transform:scaleX(0.9650);">30</div>
<div class="b" style="left:2007.5px;top:201.5px;width:91.4px;height:102.0px;background:#FFFFFF;border-radius:14px;box-shadow:0 2px 22px rgba(0,0,0,0.045);"></div>
<svg style="left:2007.5px;top:201.5px" width="91.4" height="102"><use href="#i3"/></svg>
<div class="t" style="left:2038.0px;top:266.1px;font-size:28.20px;line-height:28.20px;color:#E3E3E3;transform:scaleX(0.9650);">30</div>
<div class="b" style="left:2110.5px;top:201.5px;width:91.4px;height:102.0px;background:#FFFFFF;border-radius:14px;box-shadow:0 2px 22px rgba(0,0,0,0.045);"></div>
<svg style="left:2110.5px;top:201.5px" width="91.4" height="102"><use href="#i4"/></svg>
<div class="t" style="left:2140.7px;top:266.1px;font-size:28.20px;line-height:28.20px;color:#E3E3E3;transform:scaleX(0.9558);">+3</div>
<div class="t" style="left:2265.4px;top:72.1px;font-size:28.20px;line-height:28.20px;color:#111;transform:scaleX(0.9746);">Ma</div>
<div class="t" style="left:2265.2px;top:196.6px;font-size:28.20px;line-height:28.20px;color:#111;transform:scaleX(1.0706);">Di</div>
<div class="b" style="left:2341.4px;top:73.5px;width:44.4px;height:44.4px;background:#E8E8E8;border-radius:7px;"></div>
<div class="b" style="left:2341.4px;top:132.0px;width:44.4px;height:44.4px;background:#CD5553;border-radius:7px;"></div>
<div class="b" style="left:2341.4px;top:201.5px;width:44.4px;height:44.4px;background:#63C16B;border-radius:7px;"></div>
<div class="b" style="left:2341.4px;top:260.0px;width:44.4px;height:44.4px;background:#63C16B;border-radius:7px;"></div>
<div class="b" style="left:2427.5px;top:73.5px;width:91.4px;height:102.0px;background:#FFFFFF;border-radius:14px;box-shadow:0 2px 22px rgba(0,0,0,0.045);"></div>
<svg style="left:2427.5px;top:73.5px" width="91.4" height="102"><use href="#i1"/></svg>
<div class="t" style="left:2458.0px;top:138.1px;font-size:28.20px;line-height:28.20px;color:#E3E3E3;transform:scaleX(0.9650);">30</div>
<div class="b" style="left:2530.5px;top:73.5px;width:91.4px;height:102.0px;background:#FFFFFF;border-radius:14px;box-shadow:0 2px 22px rgba(0,0,0,0.045);"></div>
<svg style="left:2530.5px;top:73.5px" width="91.4" height="102"><use href="#i2"/></svg>
<div class="t" style="left:2561.0px;top:138.1px;font-size:28.20px;line-height:28.20px;color:#E3E3E3;transform:scaleX(0.9650);">30</div>
<div class="b" style="left:2633.5px;top:73.5px;width:91.4px;height:102.0px;background:#FFFFFF;border-radius:14px;box-shadow:0 2px 22px rgba(0,0,0,0.045);"></div>
<svg style="left:2633.5px;top:73.5px" width="91.4" height="102"><use href="#i3"/></svg>
<div class="t" style="left:2664.0px;top:138.1px;font-size:28.20px;line-height:28.20px;color:#E3E3E3;transform:scaleX(0.9650);">30</div>
<div class="b" style="left:2736.5px;top:73.5px;width:91.4px;height:102.0px;background:#FFFFFF;border-radius:14px;box-shadow:0 2px 22px rgba(0,0,0,0.045);"></div>
<svg style="left:2736.5px;top:73.5px" width="91.4" height="102"><use href="#i4"/></svg>
<div class="t" style="left:2766.7px;top:138.1px;font-size:28.20px;line-height:28.20px;color:#E3E3E3;transform:scaleX(0.9558);">+3</div>
<div class="b" style="left:2427.5px;top:201.5px;width:91.4px;height:102.0px;background:#FFFFFF;border-radius:14px;box-shadow:0 2px 22px rgba(0,0,0,0.045);"></div>
<svg style="left:2427.5px;top:201.5px" width="91.4" height="102"><use href="#i1"/></svg>
<div class="t" style="left:2458.0px;top:266.1px;font-size:28.20px;line-height:28.20px;color:#E3E3E3;transform:scaleX(0.9650);">30</div>
<div class="b" style="left:2530.5px;top:201.5px;width:91.4px;height:102.0px;background:#FFFFFF;border-radius:14px;box-shadow:0 2px 22px rgba(0,0,0,0.045);"></div>
<svg style="left:2530.5px;top:201.5px" width="91.4" height="102"><use href="#i2"/></svg>
<div class="t" style="left:2561.0px;top:266.1px;font-size:28.20px;line-height:28.20px;color:#E3E3E3;transform:scaleX(0.9650);">30</div>
<div class="b" style="left:2633.5px;top:201.5px;width:91.4px;height:102.0px;background:#FFFFFF;border-radius:14px;box-shadow:0 2px 22px rgba(0,0,0,0.045);"></div>
<svg style="left:2633.5px;top:201.5px" width="91.4" height="102"><use href="#i3"/></svg>
<div class="t" style="left:2664.0px;top:266.1px;font-size:28.20px;line-height:28.20px;color:#E3E3E3;transform:scaleX(0.9650);">30</div>
<div class="b" style="left:2736.5px;top:201.5px;width:91.4px;height:102.0px;background:#FFFFFF;border-radius:14px;box-shadow:0 2px 22px rgba(0,0,0,0.045);"></div>
<svg style="left:2736.5px;top:201.5px" width="91.4" height="102"><use href="#i4"/></svg>
<div class="t" style="left:2766.7px;top:266.1px;font-size:28.20px;line-height:28.20px;color:#E3E3E3;transform:scaleX(0.9558);">+3</div>
<div class="b" style="left:175.4px;top:331.8px;width:768.0px;height:276.5px;background:#F5F5F5;border-radius:0px;"></div>
<div class="t" style="left:228.8px;top:355.8px;font-size:28.34px;line-height:28.34px;color:#55555F;transform:scaleX(0.8826);">Lisa</div>
<div class="t" style="left:344.8px;top:353.6px;font-size:28.20px;line-height:28.20px;color:#111;transform:scaleX(0.9746);">Ma</div>
<div class="t" style="left:344.6px;top:478.1px;font-size:28.20px;line-height:28.20px;color:#111;transform:scaleX(1.0706);">Di</div>
<div class="b" style="left:420.8px;top:355.0px;width:44.4px;height:44.4px;background:#E8E8E8;border-radius:7px;"></div>
<div class="b" style="left:420.8px;top:413.5px;width:44.4px;height:44.4px;background:#CD5553;border-radius:7px;"></div>
<div class="b" style="left:420.8px;top:483.0px;width:44.4px;height:44.4px;background:#63C16B;border-radius:7px;"></div>
<div class="b" style="left:420.8px;top:541.5px;width:44.4px;height:44.4px;background:#63C16B;border-radius:7px;"></div>
<div class="b" style="left:506.9px;top:355.0px;width:91.4px;height:102.0px;background:#FFFFFF;border-radius:14px;box-shadow:0 2px 22px rgba(0,0,0,0.045);"></div>
<svg style="left:506.9px;top:355.0px" width="91.4" height="102"><use href="#i1"/></svg>
<div class="t" style="left:537.4px;top:419.6px;font-size:28.20px;line-height:28.20px;color:#E3E3E3;transform:scaleX(0.9650);">30</div>
<div class="b" style="left:609.9px;top:355.0px;width:91.4px;height:102.0px;background:#FFFFFF;border-radius:14px;box-shadow:0 2px 22px rgba(0,0,0,0.045);"></div>
<svg style="left:609.9px;top:355.0px" width="91.4" height="102"><use href="#i2"/></svg>
<div class="t" style="left:640.4px;top:419.6px;font-size:28.20px;line-height:28.20px;color:#E3E3E3;transform:scaleX(0.9650);">30</div>
<div class="b" style="left:712.9px;top:355.0px;width:91.4px;height:102.0px;background:#FFFFFF;border-radius:14px;box-shadow:0 2px 22px rgba(0,0,0,0.045);"></div>
<svg style="left:712.9px;top:355.0px" width="91.4" height="102"><use href="#i3"/></svg>
<div class="t" style="left:743.4px;top:419.6px;font-size:28.20px;line-height:28.20px;color:#E3E3E3;transform:scaleX(0.9650);">30</div>
<div class="b" style="left:815.9px;top:355.0px;width:91.4px;height:102.0px;background:#FFFFFF;border-radius:14px;box-shadow:0 2px 22px rgba(0,0,0,0.045);"></div>
<svg style="left:815.9px;top:355.0px" width="91.4" height="102"><use href="#i4"/></svg>
<div class="t" style="left:846.1px;top:419.6px;font-size:28.20px;line-height:28.20px;color:#E3E3E3;transform:scaleX(0.9558);">+3</div>
<div class="b" style="left:506.9px;top:483.0px;width:91.4px;height:102.0px;background:#FFFFFF;border-radius:14px;box-shadow:0 2px 22px rgba(0,0,0,0.045);"></div>
<svg style="left:506.9px;top:483.0px" width="91.4" height="102"><use href="#i1"/></svg>
<div class="t" style="left:537.4px;top:547.6px;font-size:28.20px;line-height:28.20px;color:#E3E3E3;transform:scaleX(0.9650);">30</div>
<div class="b" style="left:609.9px;top:483.0px;width:91.4px;height:102.0px;background:#FFFFFF;border-radius:14px;box-shadow:0 2px 22px rgba(0,0,0,0.045);"></div>
<svg style="left:609.9px;top:483.0px" width="91.4" height="102"><use href="#i2"/></svg>
<div class="t" style="left:640.4px;top:547.6px;font-size:28.20px;line-height:28.20px;color:#E3E3E3;transform:scaleX(0.9650);">30</div>
<div class="b" style="left:712.9px;top:483.0px;width:91.4px;height:102.0px;background:#FFFFFF;border-radius:14px;box-shadow:0 2px 22px rgba(0,0,0,0.045);"></div>
<svg style="left:712.9px;top:483.0px" width="91.4" height="102"><use href="#i3"/></svg>
<div class="t" style="left:743.4px;top:547.6px;font-size:28.20px;line-height:28.20px;color:#E3E3E3;transform:scaleX(0.9650);">30</div>
<div class="b" style="left:815.9px;top:483.0px;width:91.4px;height:102.0px;background:#FFFFFF;border-radius:14px;box-shadow:0 2px 22px rgba(0,0,0,0.045);"></div>
<svg style="left:815.9px;top:483.0px" width="91.4" height="102"><use href="#i4"/></svg>
<div class="t" style="left:846.1px;top:547.6px;font-size:28.20px;line-height:28.20px;color:#E3E3E3;transform:scaleX(0.9558);">+3</div>
<div class="t" style="left:229.0px;top:634.4px;font-size:29.07px;line-height:29.07px;color:#A3A3A3;transform:scaleX(0.9366);">wk 02</div>
<div class="t" style="left:344.8px;top:635.1px;font-size:28.20px;line-height:28.20px;color:#111;transform:scaleX(0.9746);">Ma</div>
<div class="t" style="left:344.6px;top:759.6px;font-size:28.20px;line-height:28.20px;color:#111;transform:scaleX(1.0706);">Di</div>
<div class="b" style="left:420.8px;top:636.5px;width:44.4px;height:44.4px;background:#E8E8E8;border-radius:7px;"></div>
<div class="b" style="left:420.8px;top:695.0px;width:44.4px;height:44.4px;background:#CD5553;border-radius:7px;"></div>
<div class="b" style="left:420.8px;top:764.5px;width:44.4px;height:44.4px;background:#63C16B;border-radius:7px;"></div>
<div class="b" style="left:420.8px;top:823.0px;width:44.4px;height:44.4px;background:#63C16B;border-radius:7px;"></div>
<div class="b" style="left:506.9px;top:636.5px;width:91.4px;height:102.0px;background:#FFFFFF;border-radius:14px;box-shadow:0 2px 22px rgba(0,0,0,0.045);"></div>
<svg style="left:506.9px;top:636.5px" width="91.4" height="102"><use href="#i1"/></svg>
<div class="t" style="left:537.4px;top:701.1px;font-size:28.20px;line-height:28.20px;color:#E3E3E3;transform:scaleX(0.9650);">30</div>
<div class="b" style="left:609.9px;top:636.5px;width:91.4px;height:102.0px;background:#FFFFFF;border-radius:14px;box-shadow:0 2px 22px rgba(0,0,0,0.045);"></div>
<svg style="left:609.9px;top:636.5px" width="91.4" height="102"><use href="#i2"/></svg>
<div class="t" style="left:640.4px;top:701.1px;font-size:28.20px;line-height:28.20px;color:#E3E3E3;transform:scaleX(0.9650);">30</div>
<div class="b" style="left:712.9px;top:636.5px;width:91.4px;height:102.0px;background:#FFFFFF;border-radius:14px;box-shadow:0 2px 22px rgba(0,0,0,0.045);"></div>
<svg style="left:712.9px;top:636.5px" width="91.4" height="102"><use href="#i3"/></svg>
<div class="t" style="left:743.4px;top:701.1px;font-size:28.20px;line-height:28.20px;color:#E3E3E3;transform:scaleX(0.9650);">30</div>
<div class="b" style="left:815.9px;top:636.5px;width:91.4px;height:102.0px;background:#FFFFFF;border-radius:14px;box-shadow:0 2px 22px rgba(0,0,0,0.045);"></div>
<svg style="left:815.9px;top:636.5px" width="91.4" height="102"><use href="#i4"/></svg>
<div class="t" style="left:846.1px;top:701.1px;font-size:28.20px;line-height:28.20px;color:#E3E3E3;transform:scaleX(0.9558);">+3</div>
<div class="b" style="left:506.9px;top:764.5px;width:91.4px;height:102.0px;background:#FFFFFF;border-radius:14px;box-shadow:0 2px 22px rgba(0,0,0,0.045);"></div>
<svg style="left:506.9px;top:764.5px" width="91.4" height="102"><use href="#i1"/></svg>
<div class="t" style="left:537.4px;top:829.1px;font-size:28.20px;line-height:28.20px;color:#E3E3E3;transform:scaleX(0.9650);">30</div>
<div class="b" style="left:609.9px;top:764.5px;width:91.4px;height:102.0px;background:#FFFFFF;border-radius:14px;box-shadow:0 2px 22px rgba(0,0,0,0.045);"></div>
<svg style="left:609.9px;top:764.5px" width="91.4" height="102"><use href="#i2"/></svg>
<div class="t" style="left:640.4px;top:829.1px;font-size:28.20px;line-height:28.20px;color:#E3E3E3;transform:scaleX(0.9650);">30</div>
<div class="b" style="left:712.9px;top:764.5px;width:91.4px;height:102.0px;background:#FFFFFF;border-radius:14px;box-shadow:0 2px 22px rgba(0,0,0,0.045);"></div>
<svg style="left:712.9px;top:764.5px" width="91.4" height="102"><use href="#i3"/></svg>
<div class="t" style="left:743.4px;top:829.1px;font-size:28.20px;line-height:28.20px;color:#E3E3E3;transform:scaleX(0.9650);">30</div>
<div class="b" style="left:815.9px;top:764.5px;width:91.4px;height:102.0px;background:#FFFFFF;border-radius:14px;box-shadow:0 2px 22px rgba(0,0,0,0.045);"></div>
<svg style="left:815.9px;top:764.5px" width="91.4" height="102"><use href="#i4"/></svg>
<div class="t" style="left:846.1px;top:829.1px;font-size:28.20px;line-height:28.20px;color:#E3E3E3;transform:scaleX(0.9558);">+3</div>
<div class="t" style="left:1012.5px;top:635.1px;font-size:28.20px;line-height:28.20px;color:#111;transform:scaleX(0.9746);">Ma</div>
<div class="t" style="left:1012.3px;top:759.6px;font-size:28.20px;line-height:28.20px;color:#111;transform:scaleX(1.0706);">Di</div>
<div class="b" style="left:1088.5px;top:636.5px;width:44.4px;height:44.4px;background:#E8E8E8;border-radius:7px;"></div>
<div class="b" style="left:1088.5px;top:695.0px;width:44.4px;height:44.4px;background:#CD5553;border-radius:7px;"></div>
<div class="b" style="left:1088.5px;top:764.5px;width:44.4px;height:44.4px;background:#63C16B;border-radius:7px;"></div>
<div class="b" style="left:1088.5px;top:823.0px;width:44.4px;height:44.4px;background:#63C16B;border-radius:7px;"></div>
<div class="b" style="left:1174.6px;top:636.5px;width:91.4px;height:102.0px;background:#FFFFFF;border-radius:14px;box-shadow:0 2px 22px rgba(0,0,0,0.045);"></div>
<svg style="left:1174.6px;top:636.5px" width="91.4" height="102"><use href="#i1"/></svg>
<div class="t" style="left:1205.1px;top:701.1px;font-size:28.20px;line-height:28.20px;color:#E3E3E3;transform:scaleX(0.9650);">30</div>
<div class="b" style="left:1277.6px;top:636.5px;width:91.4px;height:102.0px;background:#FFFFFF;border-radius:14px;box-shadow:0 2px 22px rgba(0,0,0,0.045);"></div>
<svg style="left:1277.6px;top:636.5px" width="91.4" height="102"><use href="#i2"/></svg>
<div class="t" style="left:1308.1px;top:701.1px;font-size:28.20px;line-height:28.20px;color:#E3E3E3;transform:scaleX(0.9650);">30</div>
<div class="b" style="left:1380.6px;top:636.5px;width:91.4px;height:102.0px;background:#FFFFFF;border-radius:14px;box-shadow:0 2px 22px rgba(0,0,0,0.045);"></div>
<svg style="left:1380.6px;top:636.5px" width="91.4" height="102"><use href="#i3"/></svg>
<div class="t" style="left:1411.1px;top:701.1px;font-size:28.20px;line-height:28.20px;color:#E3E3E3;transform:scaleX(0.9650);">30</div>
<div class="b" style="left:1483.6px;top:636.5px;width:91.4px;height:102.0px;background:#FFFFFF;border-radius:14px;box-shadow:0 2px 22px rgba(0,0,0,0.045);"></div>
<svg style="left:1483.6px;top:636.5px" width="91.4" height="102"><use href="#i4"/></svg>
<div class="t" style="left:1513.8px;top:701.1px;font-size:28.20px;line-height:28.20px;color:#E3E3E3;transform:scaleX(0.9558);">+3</div>
<div class="b" style="left:1174.6px;top:764.5px;width:91.4px;height:102.0px;background:#FFFFFF;border-radius:14px;box-shadow:0 2px 22px rgba(0,0,0,0.045);"></div>
<svg style="left:1174.6px;top:764.5px" width="91.4" height="102"><use href="#i1"/></svg>
<div class="t" style="left:1205.1px;top:829.1px;font-size:28.20px;line-height:28.20px;color:#E3E3E3;transform:scaleX(0.9650);">30</div>
<div class="b" style="left:1277.6px;top:764.5px;width:91.4px;height:102.0px;background:#FFFFFF;border-radius:14px;box-shadow:0 2px 22px rgba(0,0,0,0.045);"></div>
<svg style="left:1277.6px;top:764.5px" width="91.4" height="102"><use href="#i2"/></svg>
<div class="t" style="left:1308.1px;top:829.1px;font-size:28.20px;line-height:28.20px;color:#E3E3E3;transform:scaleX(0.9650);">30</div>
<div class="b" style="left:1380.6px;top:764.5px;width:91.4px;height:102.0px;background:#FFFFFF;border-radius:14px;box-shadow:0 2px 22px rgba(0,0,0,0.045);"></div>
<svg style="left:1380.6px;top:764.5px" width="91.4" height="102"><use href="#i3"/></svg>
<div class="t" style="left:1411.1px;top:829.1px;font-size:28.20px;line-height:28.20px;color:#E3E3E3;transform:scaleX(0.9650);">30</div>
<div class="b" style="left:1483.6px;top:764.5px;width:91.4px;height:102.0px;background:#FFFFFF;border-radius:14px;box-shadow:0 2px 22px rgba(0,0,0,0.045);"></div>
<svg style="left:1483.6px;top:764.5px" width="91.4" height="102"><use href="#i4"/></svg>
<div class="t" style="left:1513.8px;top:829.1px;font-size:28.20px;line-height:28.20px;color:#E3E3E3;transform:scaleX(0.9558);">+3</div>
<div class="t" style="left:1639.4px;top:635.1px;font-size:28.20px;line-height:28.20px;color:#111;transform:scaleX(0.9746);">Ma</div>
<div class="t" style="left:1639.2px;top:759.6px;font-size:28.20px;line-height:28.20px;color:#111;transform:scaleX(1.0706);">Di</div>
<div class="b" style="left:1715.4px;top:636.5px;width:44.4px;height:44.4px;background:#E8E8E8;border-radius:7px;"></div>
<div class="b" style="left:1715.4px;top:695.0px;width:44.4px;height:44.4px;background:#CD5553;border-radius:7px;"></div>
<div class="b" style="left:1715.4px;top:764.5px;width:44.4px;height:44.4px;background:#63C16B;border-radius:7px;"></div>
<div class="b" style="left:1715.4px;top:823.0px;width:44.4px;height:44.4px;background:#63C16B;border-radius:7px;"></div>
<div class="b" style="left:1801.5px;top:636.5px;width:91.4px;height:102.0px;background:#FFFFFF;border-radius:14px;box-shadow:0 2px 22px rgba(0,0,0,0.045);"></div>
<svg style="left:1801.5px;top:636.5px" width="91.4" height="102"><use href="#i1"/></svg>
<div class="t" style="left:1832.0px;top:701.1px;font-size:28.20px;line-height:28.20px;color:#E3E3E3;transform:scaleX(0.9650);">30</div>
<div class="b" style="left:1904.5px;top:636.5px;width:91.4px;height:102.0px;background:#FFFFFF;border-radius:14px;box-shadow:0 2px 22px rgba(0,0,0,0.045);"></div>
<svg style="left:1904.5px;top:636.5px" width="91.4" height="102"><use href="#i2"/></svg>
<div class="t" style="left:1935.0px;top:701.1px;font-size:28.20px;line-height:28.20px;color:#E3E3E3;transform:scaleX(0.9650);">30</div>
<div class="b" style="left:2007.5px;top:636.5px;width:91.4px;height:102.0px;background:#FFFFFF;border-radius:14px;box-shadow:0 2px 22px rgba(0,0,0,0.045);"></div>
<svg style="left:2007.5px;top:636.5px" width="91.4" height="102"><use href="#i3"/></svg>
<div class="t" style="left:2038.0px;top:701.1px;font-size:28.20px;line-height:28.20px;color:#E3E3E3;transform:scaleX(0.9650);">30</div>
<div class="b" style="left:2110.5px;top:636.5px;width:91.4px;height:102.0px;background:#FFFFFF;border-radius:14px;box-shadow:0 2px 22px rgba(0,0,0,0.045);"></div>
<svg style="left:2110.5px;top:636.5px" width="91.4" height="102"><use href="#i4"/></svg>
<div class="t" style="left:2140.7px;top:701.1px;font-size:28.20px;line-height:28.20px;color:#E3E3E3;transform:scaleX(0.9558);">+3</div>
<div class="b" style="left:1801.5px;top:764.5px;width:91.4px;height:102.0px;background:#FFFFFF;border-radius:14px;box-shadow:0 2px 22px rgba(0,0,0,0.045);"></div>
<svg style="left:1801.5px;top:764.5px" width="91.4" height="102"><use href="#i1"/></svg>
<div class="t" style="left:1832.0px;top:829.1px;font-size:28.20px;line-height:28.20px;color:#E3E3E3;transform:scaleX(0.9650);">30</div>
<div class="b" style="left:1904.5px;top:764.5px;width:91.4px;height:102.0px;background:#FFFFFF;border-radius:14px;box-shadow:0 2px 22px rgba(0,0,0,0.045);"></div>
<svg style="left:1904.5px;top:764.5px" width="91.4" height="102"><use href="#i2"/></svg>
<div class="t" style="left:1935.0px;top:829.1px;font-size:28.20px;line-height:28.20px;color:#E3E3E3;transform:scaleX(0.9650);">30</div>
<div class="b" style="left:2007.5px;top:764.5px;width:91.4px;height:102.0px;background:#FFFFFF;border-radius:14px;box-shadow:0 2px 22px rgba(0,0,0,0.045);"></div>
<svg style="left:2007.5px;top:764.5px" width="91.4" height="102"><use href="#i3"/></svg>
<div class="t" style="left:2038.0px;top:829.1px;font-size:28.20px;line-height:28.20px;color:#E3E3E3;transform:scaleX(0.9650);">30</div>
<div class="b" style="left:2110.5px;top:764.5px;width:91.4px;height:102.0px;background:#FFFFFF;border-radius:14px;box-shadow:0 2px 22px rgba(0,0,0,0.045);"></div>
<svg style="left:2110.5px;top:764.5px" width="91.4" height="102"><use href="#i4"/></svg>
<div class="t" style="left:2140.7px;top:829.1px;font-size:28.20px;line-height:28.20px;color:#E3E3E3;transform:scaleX(0.9558);">+3</div>
<div class="t" style="left:2265.4px;top:635.1px;font-size:28.20px;line-height:28.20px;color:#111;transform:scaleX(0.9746);">Ma</div>
<div class="t" style="left:2265.2px;top:759.6px;font-size:28.20px;line-height:28.20px;color:#111;transform:scaleX(1.0706);">Di</div>
<div class="b" style="left:2341.4px;top:636.5px;width:44.4px;height:44.4px;background:#E8E8E8;border-radius:7px;"></div>
<div class="b" style="left:2341.4px;top:695.0px;width:44.4px;height:44.4px;background:#CD5553;border-radius:7px;"></div>
<div class="b" style="left:2341.4px;top:764.5px;width:44.4px;height:44.4px;background:#63C16B;border-radius:7px;"></div>
<div class="b" style="left:2341.4px;top:823.0px;width:44.4px;height:44.4px;background:#63C16B;border-radius:7px;"></div>
<div class="b" style="left:2427.5px;top:636.5px;width:91.4px;height:102.0px;background:#FFFFFF;border-radius:14px;box-shadow:0 2px 22px rgba(0,0,0,0.045);"></div>
<svg style="left:2427.5px;top:636.5px" width="91.4" height="102"><use href="#i1"/></svg>
<div class="t" style="left:2458.0px;top:701.1px;font-size:28.20px;line-height:28.20px;color:#E3E3E3;transform:scaleX(0.9650);">30</div>
<div class="b" style="left:2530.5px;top:636.5px;width:91.4px;height:102.0px;background:#FFFFFF;border-radius:14px;box-shadow:0 2px 22px rgba(0,0,0,0.045);"></div>
<svg style="left:2530.5px;top:636.5px" width="91.4" height="102"><use href="#i2"/></svg>
<div class="t" style="left:2561.0px;top:701.1px;font-size:28.20px;line-height:28.20px;color:#E3E3E3;transform:scaleX(0.9650);">30</div>
<div class="b" style="left:2633.5px;top:636.5px;width:91.4px;height:102.0px;background:#FFFFFF;border-radius:14px;box-shadow:0 2px 22px rgba(0,0,0,0.045);"></div>
<svg style="left:2633.5px;top:636.5px" width="91.4" height="102"><use href="#i3"/></svg>
<div class="t" style="left:2664.0px;top:701.1px;font-size:28.20px;line-height:28.20px;color:#E3E3E3;transform:scaleX(0.9650);">30</div>
<div class="b" style="left:2736.5px;top:636.5px;width:91.4px;height:102.0px;background:#FFFFFF;border-radius:14px;box-shadow:0 2px 22px rgba(0,0,0,0.045);"></div>
<svg style="left:2736.5px;top:636.5px" width="91.4" height="102"><use href="#i4"/></svg>
<div class="t" style="left:2766.7px;top:701.1px;font-size:28.20px;line-height:28.20px;color:#E3E3E3;transform:scaleX(0.9558);">+3</div>
<div class="b" style="left:2427.5px;top:764.5px;width:91.4px;height:102.0px;background:#FFFFFF;border-radius:14px;box-shadow:0 2px 22px rgba(0,0,0,0.045);"></div>
<svg style="left:2427.5px;top:764.5px" width="91.4" height="102"><use href="#i1"/></svg>
<div class="t" style="left:2458.0px;top:829.1px;font-size:28.20px;line-height:28.20px;color:#E3E3E3;transform:scaleX(0.9650);">30</div>
<div class="b" style="left:2530.5px;top:764.5px;width:91.4px;height:102.0px;background:#FFFFFF;border-radius:14px;box-shadow:0 2px 22px rgba(0,0,0,0.045);"></div>
<svg style="left:2530.5px;top:764.5px" width="91.4" height="102"><use href="#i2"/></svg>
<div class="t" style="left:2561.0px;top:829.1px;font-size:28.20px;line-height:28.20px;color:#E3E3E3;transform:scaleX(0.9650);">30</div>
<div class="b" style="left:2633.5px;top:764.5px;width:91.4px;height:102.0px;background:#FFFFFF;border-radius:14px;box-shadow:0 2px 22px rgba(0,0,0,0.045);"></div>
<svg style="left:2633.5px;top:764.5px" width="91.4" height="102"><use href="#i3"/></svg>
<div class="t" style="left:2664.0px;top:829.1px;font-size:28.20px;line-height:28.20px;color:#E3E3E3;transform:scaleX(0.9650);">30</div>
<div class="b" style="left:2736.5px;top:764.5px;width:91.4px;height:102.0px;background:#FFFFFF;border-radius:14px;box-shadow:0 2px 22px rgba(0,0,0,0.045);"></div>
<svg style="left:2736.5px;top:764.5px" width="91.4" height="102"><use href="#i4"/></svg>
<div class="t" style="left:2766.7px;top:829.1px;font-size:28.20px;line-height:28.20px;color:#E3E3E3;transform:scaleX(0.9558);">+3</div>
<div class="b" style="left:175.4px;top:894.8px;width:768.0px;height:276.5px;background:#F5F5F5;border-radius:0px;"></div>
<div class="t" style="left:228.8px;top:918.8px;font-size:28.34px;line-height:28.34px;color:#55555F;transform:scaleX(0.8826);">Lisa</div>
<div class="t" style="left:344.8px;top:916.6px;font-size:28.20px;line-height:28.20px;color:#111;transform:scaleX(0.9746);">Ma</div>
<div class="t" style="left:344.6px;top:1041.1px;font-size:28.20px;line-height:28.20px;color:#111;transform:scaleX(1.0706);">Di</div>
<div class="b" style="left:420.8px;top:918.0px;width:44.4px;height:44.4px;background:#E8E8E8;border-radius:7px;"></div>
<div class="b" style="left:420.8px;top:976.5px;width:44.4px;height:44.4px;background:#CD5553;border-radius:7px;"></div>
<div class="b" style="left:420.8px;top:1046.0px;width:44.4px;height:44.4px;background:#63C16B;border-radius:7px;"></div>
<div class="b" style="left:420.8px;top:1104.5px;width:44.4px;height:44.4px;background:#63C16B;border-radius:7px;"></div>
<div class="b" style="left:506.9px;top:918.0px;width:91.4px;height:102.0px;background:#FFFFFF;border-radius:14px;box-shadow:0 2px 22px rgba(0,0,0,0.045);"></div>
<svg style="left:506.9px;top:918.0px" width="91.4" height="102"><use href="#i1"/></svg>
<div class="t" style="left:537.4px;top:982.6px;font-size:28.20px;line-height:28.20px;color:#E3E3E3;transform:scaleX(0.9650);">30</div>
<div class="b" style="left:609.9px;top:918.0px;width:91.4px;height:102.0px;background:#FFFFFF;border-radius:14px;box-shadow:0 2px 22px rgba(0,0,0,0.045);"></div>
<svg style="left:609.9px;top:918.0px" width="91.4" height="102"><use href="#i2"/></svg>
<div class="t" style="left:640.4px;top:982.6px;font-size:28.20px;line-height:28.20px;color:#E3E3E3;transform:scaleX(0.9650);">30</div>
<div class="b" style="left:712.9px;top:918.0px;width:91.4px;height:102.0px;background:#FFFFFF;border-radius:14px;box-shadow:0 2px 22px rgba(0,0,0,0.045);"></div>
<svg style="left:712.9px;top:918.0px" width="91.4" height="102"><use href="#i3"/></svg>
<div class="t" style="left:743.4px;top:982.6px;font-size:28.20px;line-height:28.20px;color:#E3E3E3;transform:scaleX(0.9650);">30</div>
<div class="b" style="left:815.9px;top:918.0px;width:91.4px;height:102.0px;background:#FFFFFF;border-radius:14px;box-shadow:0 2px 22px rgba(0,0,0,0.045);"></div>
<svg style="left:815.9px;top:918.0px" width="91.4" height="102"><use href="#i4"/></svg>
<div class="t" style="left:846.1px;top:982.6px;font-size:28.20px;line-height:28.20px;color:#E3E3E3;transform:scaleX(0.9558);">+3</div>
<div class="b" style="left:506.9px;top:1046.0px;width:91.4px;height:102.0px;background:#FFFFFF;border-radius:14px;box-shadow:0 2px 22px rgba(0,0,0,0.045);"></div>
<svg style="left:506.9px;top:1046.0px" width="91.4" height="102"><use href="#i1"/></svg>
<div class="t" style="left:537.4px;top:1110.6px;font-size:28.20px;line-height:28.20px;color:#E3E3E3;transform:scaleX(0.9650);">30</div>
<div class="b" style="left:609.9px;top:1046.0px;width:91.4px;height:102.0px;background:#FFFFFF;border-radius:14px;box-shadow:0 2px 22px rgba(0,0,0,0.045);"></div>
<svg style="left:609.9px;top:1046.0px" width="91.4" height="102"><use href="#i2"/></svg>
<div class="t" style="left:640.4px;top:1110.6px;font-size:28.20px;line-height:28.20px;color:#E3E3E3;transform:scaleX(0.9650);">30</div>
<div class="b" style="left:712.9px;top:1046.0px;width:91.4px;height:102.0px;background:#FFFFFF;border-radius:14px;box-shadow:0 2px 22px rgba(0,0,0,0.045);"></div>
<svg style="left:712.9px;top:1046.0px" width="91.4" height="102"><use href="#i3"/></svg>
<div class="t" style="left:743.4px;top:1110.6px;font-size:28.20px;line-height:28.20px;color:#E3E3E3;transform:scaleX(0.9650);">30</div>
<div class="b" style="left:815.9px;top:1046.0px;width:91.4px;height:102.0px;background:#FFFFFF;border-radius:14px;box-shadow:0 2px 22px rgba(0,0,0,0.045);"></div>
<svg style="left:815.9px;top:1046.0px" width="91.4" height="102"><use href="#i4"/></svg>
<div class="t" style="left:846.1px;top:1110.6px;font-size:28.20px;line-height:28.20px;color:#E3E3E3;transform:scaleX(0.9558);">+3</div>
<div class="t" style="left:229.0px;top:1197.4px;font-size:29.07px;line-height:29.07px;color:#A3A3A3;transform:scaleX(0.9329);">wk 03</div>
<div class="t" style="left:344.8px;top:1198.1px;font-size:28.20px;line-height:28.20px;color:#111;transform:scaleX(0.9746);">Ma</div>
<div class="t" style="left:344.6px;top:1322.6px;font-size:28.20px;line-height:28.20px;color:#111;transform:scaleX(1.0706);">Di</div>
<div class="b" style="left:420.8px;top:1199.5px;width:44.4px;height:44.4px;background:#E8E8E8;border-radius:7px;"></div>
<div class="b" style="left:420.8px;top:1258.0px;width:44.4px;height:44.4px;background:#CD5553;border-radius:7px;"></div>
<div class="b" style="left:420.8px;top:1327.5px;width:44.4px;height:44.4px;background:#63C16B;border-radius:7px;"></div>
<div class="b" style="left:420.8px;top:1386.0px;width:44.4px;height:44.4px;background:#63C16B;border-radius:7px;"></div>
<div class="b" style="left:506.9px;top:1199.5px;width:91.4px;height:102.0px;background:#FFFFFF;border-radius:14px;box-shadow:0 2px 22px rgba(0,0,0,0.045);"></div>
<svg style="left:506.9px;top:1199.5px" width="91.4" height="102"><use href="#i1"/></svg>
<div class="t" style="left:537.4px;top:1264.1px;font-size:28.20px;line-height:28.20px;color:#E3E3E3;transform:scaleX(0.9650);">30</div>
<div class="b" style="left:609.9px;top:1199.5px;width:91.4px;height:102.0px;background:#FFFFFF;border-radius:14px;box-shadow:0 2px 22px rgba(0,0,0,0.045);"></div>
<svg style="left:609.9px;top:1199.5px" width="91.4" height="102"><use href="#i2"/></svg>
<div class="t" style="left:640.4px;top:1264.1px;font-size:28.20px;line-height:28.20px;color:#E3E3E3;transform:scaleX(0.9650);">30</div>
<div class="b" style="left:712.9px;top:1199.5px;width:91.4px;height:102.0px;background:#FFFFFF;border-radius:14px;box-shadow:0 2px 22px rgba(0,0,0,0.045);"></div>
<svg style="left:712.9px;top:1199.5px" width="91.4" height="102"><use href="#i3"/></svg>
<div class="t" style="left:743.4px;top:1264.1px;font-size:28.20px;line-height:28.20px;color:#E3E3E3;transform:scaleX(0.9650);">30</div>
<div class="b" style="left:815.9px;top:1199.5px;width:91.4px;height:102.0px;background:#FFFFFF;border-radius:14px;box-shadow:0 2px 22px rgba(0,0,0,0.045);"></div>
<svg style="left:815.9px;top:1199.5px" width="91.4" height="102"><use href="#i4"/></svg>
<div class="t" style="left:846.1px;top:1264.1px;font-size:28.20px;line-height:28.20px;color:#E3E3E3;transform:scaleX(0.9558);">+3</div>
<div class="b" style="left:506.9px;top:1327.5px;width:91.4px;height:102.0px;background:#FFFFFF;border-radius:14px;box-shadow:0 2px 22px rgba(0,0,0,0.045);"></div>
<svg style="left:506.9px;top:1327.5px" width="91.4" height="102"><use href="#i1"/></svg>
<div class="t" style="left:537.4px;top:1392.1px;font-size:28.20px;line-height:28.20px;color:#E3E3E3;transform:scaleX(0.9650);">30</div>
<div class="b" style="left:609.9px;top:1327.5px;width:91.4px;height:102.0px;background:#FFFFFF;border-radius:14px;box-shadow:0 2px 22px rgba(0,0,0,0.045);"></div>
<svg style="left:609.9px;top:1327.5px" width="91.4" height="102"><use href="#i2"/></svg>
<div class="t" style="left:640.4px;top:1392.1px;font-size:28.20px;line-height:28.20px;color:#E3E3E3;transform:scaleX(0.9650);">30</div>
<div class="b" style="left:712.9px;top:1327.5px;width:91.4px;height:102.0px;background:#FFFFFF;border-radius:14px;box-shadow:0 2px 22px rgba(0,0,0,0.045);"></div>
<svg style="left:712.9px;top:1327.5px" width="91.4" height="102"><use href="#i3"/></svg>
<div class="t" style="left:743.4px;top:1392.1px;font-size:28.20px;line-height:28.20px;color:#E3E3E3;transform:scaleX(0.9650);">30</div>
<div class="b" style="left:815.9px;top:1327.5px;width:91.4px;height:102.0px;background:#FFFFFF;border-radius:14px;box-shadow:0 2px 22px rgba(0,0,0,0.045);"></div>
<svg style="left:815.9px;top:1327.5px" width="91.4" height="102"><use href="#i4"/></svg>
<div class="t" style="left:846.1px;top:1392.1px;font-size:28.20px;line-height:28.20px;color:#E3E3E3;transform:scaleX(0.9558);">+3</div>
<div class="t" style="left:1012.5px;top:1198.1px;font-size:28.20px;line-height:28.20px;color:#111;transform:scaleX(0.9746);">Ma</div>
<div class="t" style="left:1012.3px;top:1322.6px;font-size:28.20px;line-height:28.20px;color:#111;transform:scaleX(1.0706);">Di</div>
<div class="b" style="left:1088.5px;top:1199.5px;width:44.4px;height:44.4px;background:#E8E8E8;border-radius:7px;"></div>
<div class="b" style="left:1088.5px;top:1258.0px;width:44.4px;height:44.4px;background:#CD5553;border-radius:7px;"></div>
<div class="b" style="left:1088.5px;top:1327.5px;width:44.4px;height:44.4px;background:#63C16B;border-radius:7px;"></div>
<div class="b" style="left:1088.5px;top:1386.0px;width:44.4px;height:44.4px;background:#63C16B;border-radius:7px;"></div>
<div class="b" style="left:1174.6px;top:1199.5px;width:91.4px;height:102.0px;background:#FFFFFF;border-radius:14px;box-shadow:0 2px 22px rgba(0,0,0,0.045);"></div>
<svg style="left:1174.6px;top:1199.5px" width="91.4" height="102"><use href="#i1"/></svg>
<div class="t" style="left:1205.1px;top:1264.1px;font-size:28.20px;line-height:28.20px;color:#E3E3E3;transform:scaleX(0.9650);">30</div>
<div class="b" style="left:1277.6px;top:1199.5px;width:91.4px;height:102.0px;background:#FFFFFF;border-radius:14px;box-shadow:0 2px 22px rgba(0,0,0,0.045);"></div>
<svg style="left:1277.6px;top:1199.5px" width="91.4" height="102"><use href="#i2"/></svg>
<div class="t" style="left:1308.1px;top:1264.1px;font-size:28.20px;line-height:28.20px;color:#E3E3E3;transform:scaleX(0.9650);">30</div>
<div class="b" style="left:1380.6px;top:1199.5px;width:91.4px;height:102.0px;background:#FFFFFF;border-radius:14px;box-shadow:0 2px 22px rgba(0,0,0,0.045);"></div>
<svg style="left:1380.6px;top:1199.5px" width="91.4" height="102"><use href="#i3"/></svg>
<div class="t" style="left:1411.1px;top:1264.1px;font-size:28.20px;line-height:28.20px;color:#E3E3E3;transform:scaleX(0.9650);">30</div>
<div class="b" style="left:1483.6px;top:1199.5px;width:91.4px;height:102.0px;background:#FFFFFF;border-radius:14px;box-shadow:0 2px 22px rgba(0,0,0,0.045);"></div>
<svg style="left:1483.6px;top:1199.5px" width="91.4" height="102"><use href="#i4"/></svg>
<div class="t" style="left:1513.8px;top:1264.1px;font-size:28.20px;line-height:28.20px;color:#E3E3E3;transform:scaleX(0.9558);">+3</div>
<div class="b" style="left:1174.6px;top:1327.5px;width:91.4px;height:102.0px;background:#FFFFFF;border-radius:14px;box-shadow:0 2px 22px rgba(0,0,0,0.045);"></div>
<svg style="left:1174.6px;top:1327.5px" width="91.4" height="102"><use href="#i1"/></svg>
<div class="t" style="left:1205.1px;top:1392.1px;font-size:28.20px;line-height:28.20px;color:#E3E3E3;transform:scaleX(0.9650);">30</div>
<div class="b" style="left:1277.6px;top:1327.5px;width:91.4px;height:102.0px;background:#FFFFFF;border-radius:14px;box-shadow:0 2px 22px rgba(0,0,0,0.045);"></div>
<svg style="left:1277.6px;top:1327.5px" width="91.4" height="102"><use href="#i2"/></svg>
<div class="t" style="left:1308.1px;top:1392.1px;font-size:28.20px;line-height:28.20px;color:#E3E3E3;transform:scaleX(0.9650);">30</div>
<div class="b" style="left:1380.6px;top:1327.5px;width:91.4px;height:102.0px;background:#FFFFFF;border-radius:14px;box-shadow:0 2px 22px rgba(0,0,0,0.045);"></div>
<svg style="left:1380.6px;top:1327.5px" width="91.4" height="102"><use href="#i3"/></svg>
<div class="t" style="left:1411.1px;top:1392.1px;font-size:28.20px;line-height:28.20px;color:#E3E3E3;transform:scaleX(0.9650);">30</div>
<div class="b" style="left:1483.6px;top:1327.5px;width:91.4px;height:102.0px;background:#FFFFFF;border-radius:14px;box-shadow:0 2px 22px rgba(0,0,0,0.045);"></div>
<svg style="left:1483.6px;top:1327.5px" width="91.4" height="102"><use href="#i4"/></svg>
<div class="t" style="left:1513.8px;top:1392.1px;font-size:28.20px;line-height:28.20px;color:#E3E3E3;transform:scaleX(0.9558);">+3</div>
<div class="t" style="left:1639.4px;top:1198.1px;font-size:28.20px;line-height:28.20px;color:#111;transform:scaleX(0.9746);">Ma</div>
<div class="t" style="left:1639.2px;top:1322.6px;font-size:28.20px;line-height:28.20px;color:#111;transform:scaleX(1.0706);">Di</div>
<div class="b" style="left:1715.4px;top:1199.5px;width:44.4px;height:44.4px;background:#E8E8E8;border-radius:7px;"></div>
<div class="b" style="left:1715.4px;top:1258.0px;width:44.4px;height:44.4px;background:#CD5553;border-radius:7px;"></div>
<div class="b" style="left:1715.4px;top:1327.5px;width:44.4px;height:44.4px;background:#63C16B;border-radius:7px;"></div>
<div class="b" style="left:1715.4px;top:1386.0px;width:44.4px;height:44.4px;background:#63C16B;border-radius:7px;"></div>
<div class="b" style="left:1801.5px;top:1199.5px;width:91.4px;height:102.0px;background:#FFFFFF;border-radius:14px;box-shadow:0 2px 22px rgba(0,0,0,0.045);"></div>
<svg style="left:1801.5px;top:1199.5px" width="91.4" height="102"><use href="#i1"/></svg>
<div class="t" style="left:1832.0px;top:1264.1px;font-size:28.20px;line-height:28.20px;color:#E3E3E3;transform:scaleX(0.9650);">30</div>
<div class="b" style="left:1904.5px;top:1199.5px;width:91.4px;height:102.0px;background:#FFFFFF;border-radius:14px;box-shadow:0 2px 22px rgba(0,0,0,0.045);"></div>
<svg style="left:1904.5px;top:1199.5px" width="91.4" height="102"><use href="#i2"/></svg>
<div class="t" style="left:1935.0px;top:1264.1px;font-size:28.20px;line-height:28.20px;color:#E3E3E3;transform:scaleX(0.9650);">30</div>
<div class="b" style="left:2007.5px;top:1199.5px;width:91.4px;height:102.0px;background:#FFFFFF;border-radius:14px;box-shadow:0 2px 22px rgba(0,0,0,0.045);"></div>
<svg style="left:2007.5px;top:1199.5px" width="91.4" height="102"><use href="#i3"/></svg>
<div class="t" style="left:2038.0px;top:1264.1px;font-size:28.20px;line-height:28.20px;color:#E3E3E3;transform:scaleX(0.9650);">30</div>
<div class="b" style="left:2110.5px;top:1199.5px;width:91.4px;height:102.0px;background:#FFFFFF;border-radius:14px;box-shadow:0 2px 22px rgba(0,0,0,0.045);"></div>
<svg style="left:2110.5px;top:1199.5px" width="91.4" height="102"><use href="#i4"/></svg>
<div class="t" style="left:2140.7px;top:1264.1px;font-size:28.20px;line-height:28.20px;color:#E3E3E3;transform:scaleX(0.9558);">+3</div>
<div class="b" style="left:1801.5px;top:1327.5px;width:91.4px;height:102.0px;background:#FFFFFF;border-radius:14px;box-shadow:0 2px 22px rgba(0,0,0,0.045);"></div>
<svg style="left:1801.5px;top:1327.5px" width="91.4" height="102"><use href="#i1"/></svg>
<div class="t" style="left:1832.0px;top:1392.1px;font-size:28.20px;line-height:28.20px;color:#E3E3E3;transform:scaleX(0.9650);">30</div>
<div class="b" style="left:1904.5px;top:1327.5px;width:91.4px;height:102.0px;background:#FFFFFF;border-radius:14px;box-shadow:0 2px 22px rgba(0,0,0,0.045);"></div>
<svg style="left:1904.5px;top:1327.5px" width="91.4" height="102"><use href="#i2"/></svg>
<div class="t" style="left:1935.0px;top:1392.1px;font-size:28.20px;line-height:28.20px;color:#E3E3E3;transform:scaleX(0.9650);">30</div>
<div class="b" style="left:2007.5px;top:1327.5px;width:91.4px;height:102.0px;background:#FFFFFF;border-radius:14px;box-shadow:0 2px 22px rgba(0,0,0,0.045);"></div>
<svg style="left:2007.5px;top:1327.5px" width="91.4" height="102"><use href="#i3"/></svg>
<div class="t" style="left:2038.0px;top:1392.1px;font-size:28.20px;line-height:28.20px;color:#E3E3E3;transform:scaleX(0.9650);">30</div>
<div class="b" style="left:2110.5px;top:1327.5px;width:91.4px;height:102.0px;background:#FFFFFF;border-radius:14px;box-shadow:0 2px 22px rgba(0,0,0,0.045);"></div>
<svg style="left:2110.5px;top:1327.5px" width="91.4" height="102"><use href="#i4"/></svg>
<div class="t" style="left:2140.7px;top:1392.1px;font-size:28.20px;line-height:28.20px;color:#E3E3E3;transform:scaleX(0.9558);">+3</div>
<div class="t" style="left:2265.4px;top:1198.1px;font-size:28.20px;line-height:28.20px;color:#111;transform:scaleX(0.9746);">Ma</div>
<div class="t" style="left:2265.2px;top:1322.6px;font-size:28.20px;line-height:28.20px;color:#111;transform:scaleX(1.0706);">Di</div>
<div class="b" style="left:2341.4px;top:1199.5px;width:44.4px;height:44.4px;background:#E8E8E8;border-radius:7px;"></div>
<div class="b" style="left:2341.4px;top:1258.0px;width:44.4px;height:44.4px;background:#CD5553;border-radius:7px;"></div>
<div class="b" style="left:2341.4px;top:1327.5px;width:44.4px;height:44.4px;background:#63C16B;border-radius:7px;"></div>
<div class="b" style="left:2341.4px;top:1386.0px;width:44.4px;height:44.4px;background:#63C16B;border-radius:7px;"></div>
<div class="b" style="left:2427.5px;top:1199.5px;width:91.4px;height:102.0px;background:#FFFFFF;border-radius:14px;box-shadow:0 2px 22px rgba(0,0,0,0.045);"></div>
<svg style="left:2427.5px;top:1199.5px" width="91.4" height="102"><use href="#i1"/></svg>
<div class="t" style="left:2458.0px;top:1264.1px;font-size:28.20px;line-height:28.20px;color:#E3E3E3;transform:scaleX(0.9650);">30</div>
<div class="b" style="left:2530.5px;top:1199.5px;width:91.4px;height:102.0px;background:#FFFFFF;border-radius:14px;box-shadow:0 2px 22px rgba(0,0,0,0.045);"></div>
<svg style="left:2530.5px;top:1199.5px" width="91.4" height="102"><use href="#i2"/></svg>
<div class="t" style="left:2561.0px;top:1264.1px;font-size:28.20px;line-height:28.20px;color:#E3E3E3;transform:scaleX(0.9650);">30</div>
<div class="b" style="left:2633.5px;top:1199.5px;width:91.4px;height:102.0px;background:#FFFFFF;border-radius:14px;box-shadow:0 2px 22px rgba(0,0,0,0.045);"></div>
<svg style="left:2633.5px;top:1199.5px" width="91.4" height="102"><use href="#i3"/></svg>
<div class="t" style="left:2664.0px;top:1264.1px;font-size:28.20px;line-height:28.20px;color:#E3E3E3;transform:scaleX(0.9650);">30</div>
<div class="b" style="left:2736.5px;top:1199.5px;width:91.4px;height:102.0px;background:#FFFFFF;border-radius:14px;box-shadow:0 2px 22px rgba(0,0,0,0.045);"></div>
<svg style="left:2736.5px;top:1199.5px" width="91.4" height="102"><use href="#i4"/></svg>
<div class="t" style="left:2766.7px;top:1264.1px;font-size:28.20px;line-height:28.20px;color:#E3E3E3;transform:scaleX(0.9558);">+3</div>
<div class="b" style="left:2427.5px;top:1327.5px;width:91.4px;height:102.0px;background:#FFFFFF;border-radius:14px;box-shadow:0 2px 22px rgba(0,0,0,0.045);"></div>
<svg style="left:2427.5px;top:1327.5px" width="91.4" height="102"><use href="#i1"/></svg>
<div class="t" style="left:2458.0px;top:1392.1px;font-size:28.20px;line-height:28.20px;color:#E3E3E3;transform:scaleX(0.9650);">30</div>
<div class="b" style="left:2530.5px;top:1327.5px;width:91.4px;height:102.0px;background:#FFFFFF;border-radius:14px;box-shadow:0 2px 22px rgba(0,0,0,0.045);"></div>
<svg style="left:2530.5px;top:1327.5px" width="91.4" height="102"><use href="#i2"/></svg>
<div class="t" style="left:2561.0px;top:1392.1px;font-size:28.20px;line-height:28.20px;color:#E3E3E3;transform:scaleX(0.9650);">30</div>
<div class="b" style="left:2633.5px;top:1327.5px;width:91.4px;height:102.0px;background:#FFFFFF;border-radius:14px;box-shadow:0 2px 22px rgba(0,0,0,0.045);"></div>
<svg style="left:2633.5px;top:1327.5px" width="91.4" height="102"><use href="#i3"/></svg>
<div class="t" style="left:2664.0px;top:1392.1px;font-size:28.20px;line-height:28.20px;color:#E3E3E3;transform:scaleX(0.9650);">30</div>
<div class="b" style="left:2736.5px;top:1327.5px;width:91.4px;height:102.0px;background:#FFFFFF;border-radius:14px;box-shadow:0 2px 22px rgba(0,0,0,0.045);"></div>
<svg style="left:2736.5px;top:1327.5px" width="91.4" height="102"><use href="#i4"/></svg>
<div class="t" style="left:2766.7px;top:1392.1px;font-size:28.20px;line-height:28.20px;color:#E3E3E3;transform:scaleX(0.9558);">+3</div>
<div class="b" style="left:175.4px;top:1457.8px;width:768.0px;height:276.5px;background:#F5F5F5;border-radius:0px;"></div>
<div class="t" style="left:228.8px;top:1481.8px;font-size:28.34px;line-height:28.34px;color:#55555F;transform:scaleX(0.8826);">Lisa</div>
<div class="t" style="left:344.8px;top:1479.6px;font-size:28.20px;line-height:28.20px;color:#111;transform:scaleX(0.9746);">Ma</div>
<div class="t" style="left:344.6px;top:1604.1px;font-size:28.20px;line-height:28.20px;color:#111;transform:scaleX(1.0706);">Di</div>
<div class="b" style="left:420.8px;top:1481.0px;width:44.4px;height:44.4px;background:#E8E8E8;border-radius:7px;"></div>
<div class="b" style="left:420.8px;top:1539.5px;width:44.4px;height:44.4px;background:#CD5553;border-radius:7px;"></div>
<div class="b" style="left:420.8px;top:1609.0px;width:44.4px;height:44.4px;background:#63C16B;border-radius:7px;"></div>
<div class="b" style="left:420.8px;top:1667.5px;width:44.4px;height:44.4px;background:#63C16B;border-radius:7px;"></div>
<div class="b" style="left:506.9px;top:1481.0px;width:91.4px;height:102.0px;background:#FFFFFF;border-radius:14px;box-shadow:0 2px 22px rgba(0,0,0,0.045);"></div>
<svg style="left:506.9px;top:1481.0px" width="91.4" height="102"><use href="#i1"/></svg>
<div class="t" style="left:537.4px;top:1545.6px;font-size:28.20px;line-height:28.20px;color:#E3E3E3;transform:scaleX(0.9650);">30</div>
<div class="b" style="left:609.9px;top:1481.0px;width:91.4px;height:102.0px;background:#FFFFFF;border-radius:14px;box-shadow:0 2px 22px rgba(0,0,0,0.045);"></div>
<svg style="left:609.9px;top:1481.0px" width="91.4" height="102"><use href="#i2"/></svg>
<div class="t" style="left:640.4px;top:1545.6px;font-size:28.20px;line-height:28.20px;color:#E3E3E3;transform:scaleX(0.9650);">30</div>
<div class="b" style="left:712.9px;top:1481.0px;width:91.4px;height:102.0px;background:#FFFFFF;border-radius:14px;box-shadow:0 2px 22px rgba(0,0,0,0.045);"></div>
<svg style="left:712.9px;top:1481.0px" width="91.4" height="102"><use href="#i3"/></svg>
<div class="t" style="left:743.4px;top:1545.6px;font-size:28.20px;line-height:28.20px;color:#E3E3E3;transform:scaleX(0.9650);">30</div>
<div class="b" style="left:815.9px;top:1481.0px;width:91.4px;height:102.0px;background:#FFFFFF;border-radius:14px;box-shadow:0 2px 22px rgba(0,0,0,0.045);"></div>
<svg style="left:815.9px;top:1481.0px" width="91.4" height="102"><use href="#i4"/></svg>
<div class="t" style="left:846.1px;top:1545.6px;font-size:28.20px;line-height:28.20px;color:#E3E3E3;transform:scaleX(0.9558);">+3</div>
<div class="b" style="left:506.9px;top:1609.0px;width:91.4px;height:102.0px;background:#FFFFFF;border-radius:14px;box-shadow:0 2px 22px rgba(0,0,0,0.045);"></div>
<svg style="left:506.9px;top:1609.0px" width="91.4" height="102"><use href="#i1"/></svg>
<div class="t" style="left:537.4px;top:1673.6px;font-size:28.20px;line-height:28.20px;color:#E3E3E3;transform:scaleX(0.9650);">30</div>
<div class="b" style="left:609.9px;top:1609.0px;width:91.4px;height:102.0px;background:#FFFFFF;border-radius:14px;box-shadow:0 2px 22px rgba(0,0,0,0.045);"></div>
<svg style="left:609.9px;top:1609.0px" width="91.4" height="102"><use href="#i2"/></svg>
<div class="t" style="left:640.4px;top:1673.6px;font-size:28.20px;line-height:28.20px;color:#E3E3E3;transform:scaleX(0.9650);">30</div>
<div class="b" style="left:712.9px;top:1609.0px;width:91.4px;height:102.0px;background:#FFFFFF;border-radius:14px;box-shadow:0 2px 22px rgba(0,0,0,0.045);"></div>
<svg style="left:712.9px;top:1609.0px" width="91.4" height="102"><use href="#i3"/></svg>
<div class="t" style="left:743.4px;top:1673.6px;font-size:28.20px;line-height:28.20px;color:#E3E3E3;transform:scaleX(0.9650);">30</div>
<div class="b" style="left:815.9px;top:1609.0px;width:91.4px;height:102.0px;background:#FFFFFF;border-radius:14px;box-shadow:0 2px 22px rgba(0,0,0,0.045);"></div>
<svg style="left:815.9px;top:1609.0px" width="91.4" height="102"><use href="#i4"/></svg>
<div class="t" style="left:846.1px;top:1673.6px;font-size:28.20px;line-height:28.20px;color:#E3E3E3;transform:scaleX(0.9558);">+3</div>
<div class="t" style="left:229.0px;top:1760.4px;font-size:29.07px;line-height:29.07px;color:#A3A3A3;transform:scaleX(0.9275);">wk 04</div>
<div class="t" style="left:344.8px;top:1761.1px;font-size:28.20px;line-height:28.20px;color:#111;transform:scaleX(0.9746);">Ma</div>
<div class="t" style="left:344.6px;top:1885.6px;font-size:28.20px;line-height:28.20px;color:#111;transform:scaleX(1.0706);">Di</div>
<div class="b" style="left:420.8px;top:1762.5px;width:44.4px;height:44.4px;background:#E8E8E8;border-radius:7px;"></div>
<div class="b" style="left:420.8px;top:1821.0px;width:44.4px;height:44.4px;background:#CD5553;border-radius:7px;"></div>
<div class="b" style="left:420.8px;top:1890.5px;width:44.4px;height:44.4px;background:#63C16B;border-radius:7px;"></div>
<div class="b" style="left:420.8px;top:1949.0px;width:44.4px;height:44.4px;background:#63C16B;border-radius:7px;"></div>
<div class="b" style="left:506.9px;top:1762.5px;width:91.4px;height:102.0px;background:#FFFFFF;border-radius:14px;box-shadow:0 2px 22px rgba(0,0,0,0.045);"></div>
<svg style="left:506.9px;top:1762.5px" width="91.4" height="102"><use href="#i1"/></svg>
<div class="t" style="left:537.4px;top:1827.1px;font-size:28.20px;line-height:28.20px;color:#E3E3E3;transform:scaleX(0.9650);">30</div>
<div class="b" style="left:609.9px;top:1762.5px;width:91.4px;height:102.0px;background:#FFFFFF;border-radius:14px;box-shadow:0 2px 22px rgba(0,0,0,0.045);"></div>
<svg style="left:609.9px;top:1762.5px" width="91.4" height="102"><use href="#i2"/></svg>
<div class="t" style="left:640.4px;top:1827.1px;font-size:28.20px;line-height:28.20px;color:#E3E3E3;transform:scaleX(0.9650);">30</div>
<div class="b" style="left:712.9px;top:1762.5px;width:91.4px;height:102.0px;background:#FFFFFF;border-radius:14px;box-shadow:0 2px 22px rgba(0,0,0,0.045);"></div>
<svg style="left:712.9px;top:1762.5px" width="91.4" height="102"><use href="#i3"/></svg>
<div class="t" style="left:743.4px;top:1827.1px;font-size:28.20px;line-height:28.20px;color:#E3E3E3;transform:scaleX(0.9650);">30</div>
<div class="b" style="left:815.9px;top:1762.5px;width:91.4px;height:102.0px;background:#FFFFFF;border-radius:14px;box-shadow:0 2px 22px rgba(0,0,0,0.045);"></div>
<svg style="left:815.9px;top:1762.5px" width="91.4" height="102"><use href="#i4"/></svg>
<div class="t" style="left:846.1px;top:1827.1px;font-size:28.20px;line-height:28.20px;color:#E3E3E3;transform:scaleX(0.9558);">+3</div>
<div class="b" style="left:506.9px;top:1890.5px;width:91.4px;height:102.0px;background:#FFFFFF;border-radius:14px;box-shadow:0 2px 22px rgba(0,0,0,0.045);"></div>
<svg style="left:506.9px;top:1890.5px" width="91.4" height="102"><use href="#i1"/></svg>
<div class="t" style="left:537.4px;top:1955.1px;font-size:28.20px;line-height:28.20px;color:#E3E3E3;transform:scaleX(0.9650);">30</div>
<div class="b" style="left:609.9px;top:1890.5px;width:91.4px;height:102.0px;background:#FFFFFF;border-radius:14px;box-shadow:0 2px 22px rgba(0,0,0,0.045);"></div>
<svg style="left:609.9px;top:1890.5px" width="91.4" height="102"><use href="#i2"/></svg>
<div class="t" style="left:640.4px;top:1955.1px;font-size:28.20px;line-height:28.20px;color:#E3E3E3;transform:scaleX(0.9650);">30</div>
<div class="b" style="left:712.9px;top:1890.5px;width:91.4px;height:102.0px;background:#FFFFFF;border-radius:14px;box-shadow:0 2px 22px rgba(0,0,0,0.045);"></div>
<svg style="left:712.9px;top:1890.5px" width="91.4" height="102"><use href="#i3"/></svg>
<div class="t" style="left:743.4px;top:1955.1px;font-size:28.20px;line-height:28.20px;color:#E3E3E3;transform:scaleX(0.9650);">30</div>
<div class="b" style="left:815.9px;top:1890.5px;width:91.4px;height:102.0px;background:#FFFFFF;border-radius:14px;box-shadow:0 2px 22px rgba(0,0,0,0.045);"></div>
<svg style="left:815.9px;top:1890.5px" width="91.4" height="102"><use href="#i4"/></svg>
<div class="t" style="left:846.1px;top:1955.1px;font-size:28.20px;line-height:28.20px;color:#E3E3E3;transform:scaleX(0.9558);">+3</div>
<div class="t" style="left:1012.5px;top:1761.1px;font-size:28.20px;line-height:28.20px;color:#111;transform:scaleX(0.9746);">Ma</div>
<div class="t" style="left:1012.3px;top:1885.6px;font-size:28.20px;line-height:28.20px;color:#111;transform:scaleX(1.0706);">Di</div>
<div class="b" style="left:1088.5px;top:1762.5px;width:44.4px;height:44.4px;background:#E8E8E8;border-radius:7px;"></div>
<div class="b" style="left:1088.5px;top:1821.0px;width:44.4px;height:44.4px;background:#CD5553;border-radius:7px;"></div>
<div class="b" style="left:1088.5px;top:1890.5px;width:44.4px;height:44.4px;background:#63C16B;border-radius:7px;"></div>
<div class="b" style="left:1088.5px;top:1949.0px;width:44.4px;height:44.4px;background:#63C16B;border-radius:7px;"></div>
<div class="b" style="left:1174.6px;top:1762.5px;width:91.4px;height:102.0px;background:#FFFFFF;border-radius:14px;box-shadow:0 2px 22px rgba(0,0,0,0.045);"></div>
<svg style="left:1174.6px;top:1762.5px" width="91.4" height="102"><use href="#i1"/></svg>
<div class="t" style="left:1205.1px;top:1827.1px;font-size:28.20px;line-height:28.20px;color:#E3E3E3;transform:scaleX(0.9650);">30</div>
<div class="b" style="left:1277.6px;top:1762.5px;width:91.4px;height:102.0px;background:#FFFFFF;border-radius:14px;box-shadow:0 2px 22px rgba(0,0,0,0.045);"></div>
<svg style="left:1277.6px;top:1762.5px" width="91.4" height="102"><use href="#i2"/></svg>
<div class="t" style="left:1308.1px;top:1827.1px;font-size:28.20px;line-height:28.20px;color:#E3E3E3;transform:scaleX(0.9650);">30</div>
<div class="b" style="left:1380.6px;top:1762.5px;width:91.4px;height:102.0px;background:#FFFFFF;border-radius:14px;box-shadow:0 2px 22px rgba(0,0,0,0.045);"></div>
<svg style="left:1380.6px;top:1762.5px" width="91.4" height="102"><use href="#i3"/></svg>
<div class="t" style="left:1411.1px;top:1827.1px;font-size:28.20px;line-height:28.20px;color:#E3E3E3;transform:scaleX(0.9650);">30</div>
<div class="b" style="left:1483.6px;top:1762.5px;width:91.4px;height:102.0px;background:#FFFFFF;border-radius:14px;box-shadow:0 2px 22px rgba(0,0,0,0.045);"></div>
<svg style="left:1483.6px;top:1762.5px" width="91.4" height="102"><use href="#i4"/></svg>
<div class="t" style="left:1513.8px;top:1827.1px;font-size:28.20px;line-height:28.20px;color:#E3E3E3;transform:scaleX(0.9558);">+3</div>
<div class="b" style="left:1174.6px;top:1890.5px;width:91.4px;height:102.0px;background:#FFFFFF;border-radius:14px;box-shadow:0 2px 22px rgba(0,0,0,0.045);"></div>
<svg style="left:1174.6px;top:1890.5px" width="91.4" height="102"><use href="#i1"/></svg>
<div class="t" style="left:1205.1px;top:1955.1px;font-size:28.20px;line-height:28.20px;color:#E3E3E3;transform:scaleX(0.9650);">30</div>
<div class="b" style="left:1277.6px;top:1890.5px;width:91.4px;height:102.0px;background:#FFFFFF;border-radius:14px;box-shadow:0 2px 22px rgba(0,0,0,0.045);"></div>
<svg style="left:1277.6px;top:1890.5px" width="91.4" height="102"><use href="#i2"/></svg>
<div class="t" style="left:1308.1px;top:1955.1px;font-size:28.20px;line-height:28.20px;color:#E3E3E3;transform:scaleX(0.9650);">30</div>
<div class="b" style="left:1380.6px;top:1890.5px;width:91.4px;height:102.0px;background:#FFFFFF;border-radius:14px;box-shadow:0 2px 22px rgba(0,0,0,0.045);"></div>
<svg style="left:1380.6px;top:1890.5px" width="91.4" height="102"><use href="#i3"/></svg>
<div class="t" style="left:1411.1px;top:1955.1px;font-size:28.20px;line-height:28.20px;color:#E3E3E3;transform:scaleX(0.9650);">30</div>
<div class="b" style="left:1483.6px;top:1890.5px;width:91.4px;height:102.0px;background:#FFFFFF;border-radius:14px;box-shadow:0 2px 22px rgba(0,0,0,0.045);"></div>
<svg style="left:1483.6px;top:1890.5px" width="91.4" height="102"><use href="#i4"/></svg>
<div class="t" style="left:1513.8px;top:1955.1px;font-size:28.20px;line-height:28.20px;color:#E3E3E3;transform:scaleX(0.9558);">+3</div>
<div class="t" style="left:1639.4px;top:1761.1px;font-size:28.20px;line-height:28.20px;color:#111;transform:scaleX(0.9746);">Ma</div>
<div class="t" style="left:1639.2px;top:1885.6px;font-size:28.20px;line-height:28.20px;color:#111;transform:scaleX(1.0706);">Di</div>
<div class="b" style="left:1715.4px;top:1762.5px;width:44.4px;height:44.4px;background:#E8E8E8;border-radius:7px;"></div>
<div class="b" style="left:1715.4px;top:1821.0px;width:44.4px;height:44.4px;background:#CD5553;border-radius:7px;"></div>
<div class="b" style="left:1715.4px;top:1890.5px;width:44.4px;height:44.4px;background:#63C16B;border-radius:7px;"></div>
<div class="b" style="left:1715.4px;top:1949.0px;width:44.4px;height:44.4px;background:#63C16B;border-radius:7px;"></div>
<div class="b" style="left:1801.5px;top:1762.5px;width:91.4px;height:102.0px;background:#FFFFFF;border-radius:14px;box-shadow:0 2px 22px rgba(0,0,0,0.045);"></div>
<svg style="left:1801.5px;top:1762.5px" width="91.4" height="102"><use href="#i1"/></svg>
<div class="t" style="left:1832.0px;top:1827.1px;font-size:28.20px;line-height:28.20px;color:#E3E3E3;transform:scaleX(0.9650);">30</div>
<div class="b" style="left:1904.5px;top:1762.5px;width:91.4px;height:102.0px;background:#FFFFFF;border-radius:14px;box-shadow:0 2px 22px rgba(0,0,0,0.045);"></div>
<svg style="left:1904.5px;top:1762.5px" width="91.4" height="102"><use href="#i2"/></svg>
<div class="t" style="left:1935.0px;top:1827.1px;font-size:28.20px;line-height:28.20px;color:#E3E3E3;transform:scaleX(0.9650);">30</div>
<div class="b" style="left:2007.5px;top:1762.5px;width:91.4px;height:102.0px;background:#FFFFFF;border-radius:14px;box-shadow:0 2px 22px rgba(0,0,0,0.045);"></div>
<svg style="left:2007.5px;top:1762.5px" width="91.4" height="102"><use href="#i3"/></svg>
<div class="t" style="left:2038.0px;top:1827.1px;font-size:28.20px;line-height:28.20px;color:#E3E3E3;transform:scaleX(0.9650);">30</div>
<div class="b" style="left:2110.5px;top:1762.5px;width:91.4px;height:102.0px;background:#FFFFFF;border-radius:14px;box-shadow:0 2px 22px rgba(0,0,0,0.045);"></div>
<svg style="left:2110.5px;top:1762.5px" width="91.4" height="102"><use href="#i4"/></svg>
<div class="t" style="left:2140.7px;top:1827.1px;font-size:28.20px;line-height:28.20px;color:#E3E3E3;transform:scaleX(0.9558);">+3</div>
<div class="b" style="left:1801.5px;top:1890.5px;width:91.4px;height:102.0px;background:#FFFFFF;border-radius:14px;box-shadow:0 2px 22px rgba(0,0,0,0.045);"></div>
<svg style="left:1801.5px;top:1890.5px" width="91.4" height="102"><use href="#i1"/></svg>
<div class="t" style="left:1832.0px;top:1955.1px;font-size:28.20px;line-height:28.20px;color:#E3E3E3;transform:scaleX(0.9650);">30</div>
<div class="b" style="left:1904.5px;top:1890.5px;width:91.4px;height:102.0px;background:#FFFFFF;border-radius:14px;box-shadow:0 2px 22px rgba(0,0,0,0.045);"></div>
<svg style="left:1904.5px;top:1890.5px" width="91.4" height="102"><use href="#i2"/></svg>
<div class="t" style="left:1935.0px;top:1955.1px;font-size:28.20px;line-height:28.20px;color:#E3E3E3;transform:scaleX(0.9650);">30</div>
<div class="b" style="left:2007.5px;top:1890.5px;width:91.4px;height:102.0px;background:#FFFFFF;border-radius:14px;box-shadow:0 2px 22px rgba(0,0,0,0.045);"></div>
<svg style="left:2007.5px;top:1890.5px" width="91.4" height="102"><use href="#i3"/></svg>
<div class="t" style="left:2038.0px;top:1955.1px;font-size:28.20px;line-height:28.20px;color:#E3E3E3;transform:scaleX(0.9650);">30</div>
<div class="b" style="left:2110.5px;top:1890.5px;width:91.4px;height:102.0px;background:#FFFFFF;border-radius:14px;box-shadow:0 2px 22px rgba(0,0,0,0.045);"></div>
<svg style="left:2110.5px;top:1890.5px" width="91.4" height="102"><use href="#i4"/></svg>
<div class="t" style="left:2140.7px;top:1955.1px;font-size:28.20px;line-height:28.20px;color:#E3E3E3;transform:scaleX(0.9558);">+3</div>
<div class="t" style="left:2265.4px;top:1761.1px;font-size:28.20px;line-height:28.20px;color:#111;transform:scaleX(0.9746);">Ma</div>
<div class="t" style="left:2265.2px;top:1885.6px;font-size:28.20px;line-height:28.20px;color:#111;transform:scaleX(1.0706);">Di</div>
<div class="b" style="left:2341.4px;top:1762.5px;width:44.4px;height:44.4px;background:#E8E8E8;border-radius:7px;"></div>
<div class="b" style="left:2341.4px;top:1821.0px;width:44.4px;height:44.4px;background:#CD5553;border-radius:7px;"></div>
<div class="b" style="left:2341.4px;top:1890.5px;width:44.4px;height:44.4px;background:#63C16B;border-radius:7px;"></div>
<div class="b" style="left:2341.4px;top:1949.0px;width:44.4px;height:44.4px;background:#63C16B;border-radius:7px;"></div>
<div class="b" style="left:2427.5px;top:1762.5px;width:91.4px;height:102.0px;background:#FFFFFF;border-radius:14px;box-shadow:0 2px 22px rgba(0,0,0,0.045);"></div>
<svg style="left:2427.5px;top:1762.5px" width="91.4" height="102"><use href="#i1"/></svg>
<div class="t" style="left:2458.0px;top:1827.1px;font-size:28.20px;line-height:28.20px;color:#E3E3E3;transform:scaleX(0.9650);">30</div>
<div class="b" style="left:2530.5px;top:1762.5px;width:91.4px;height:102.0px;background:#FFFFFF;border-radius:14px;box-shadow:0 2px 22px rgba(0,0,0,0.045);"></div>
<svg style="left:2530.5px;top:1762.5px" width="91.4" height="102"><use href="#i2"/></svg>
<div class="t" style="left:2561.0px;top:1827.1px;font-size:28.20px;line-height:28.20px;color:#E3E3E3;transform:scaleX(0.9650);">30</div>
<div class="b" style="left:2633.5px;top:1762.5px;width:91.4px;height:102.0px;background:#FFFFFF;border-radius:14px;box-shadow:0 2px 22px rgba(0,0,0,0.045);"></div>
<svg style="left:2633.5px;top:1762.5px" width="91.4" height="102"><use href="#i3"/></svg>
<div class="t" style="left:2664.0px;top:1827.1px;font-size:28.20px;line-height:28.20px;color:#E3E3E3;transform:scaleX(0.9650);">30</div>
<div class="b" style="left:2736.5px;top:1762.5px;width:91.4px;height:102.0px;background:#FFFFFF;border-radius:14px;box-shadow:0 2px 22px rgba(0,0,0,0.045);"></div>
<svg style="left:2736.5px;top:1762.5px" width="91.4" height="102"><use href="#i4"/></svg>
<div class="t" style="left:2766.7px;top:1827.1px;font-size:28.20px;line-height:28.20px;color:#E3E3E3;transform:scaleX(0.9558);">+3</div>
<div class="b" style="left:2427.5px;top:1890.5px;width:91.4px;height:102.0px;background:#FFFFFF;border-radius:14px;box-shadow:0 2px 22px rgba(0,0,0,0.045);"></div>
<svg style="left:2427.5px;top:1890.5px" width="91.4" height="102"><use href="#i1"/></svg>
<div class="t" style="left:2458.0px;top:1955.1px;font-size:28.20px;line-height:28.20px;color:#E3E3E3;transform:scaleX(0.9650);">30</div>
<div class="b" style="left:2530.5px;top:1890.5px;width:91.4px;height:102.0px;background:#FFFFFF;border-radius:14px;box-shadow:0 2px 22px rgba(0,0,0,0.045);"></div>
<svg style="left:2530.5px;top:1890.5px" width="91.4" height="102"><use href="#i2"/></svg>
<div class="t" style="left:2561.0px;top:1955.1px;font-size:28.20px;line-height:28.20px;color:#E3E3E3;transform:scaleX(0.9650);">30</div>
<div class="b" style="left:2633.5px;top:1890.5px;width:91.4px;height:102.0px;background:#FFFFFF;border-radius:14px;box-shadow:0 2px 22px rgba(0,0,0,0.045);"></div>
<svg style="left:2633.5px;top:1890.5px" width="91.4" height="102"><use href="#i3"/></svg>
<div class="t" style="left:2664.0px;top:1955.1px;font-size:28.20px;line-height:28.20px;color:#E3E3E3;transform:scaleX(0.9650);">30</div>
<div class="b" style="left:2736.5px;top:1890.5px;width:91.4px;height:102.0px;background:#FFFFFF;border-radius:14px;box-shadow:0 2px 22px rgba(0,0,0,0.045);"></div>
<svg style="left:2736.5px;top:1890.5px" width="91.4" height="102"><use href="#i4"/></svg>
<div class="t" style="left:2766.7px;top:1955.1px;font-size:28.20px;line-height:28.20px;color:#E3E3E3;transform:scaleX(0.9558);">+3</div>
<div class="b" style="left:2509px;top:0;width:100px;height:2048px;background:linear-gradient(93.2deg,rgba(255,255,255,0.02) 0%,rgba(255,255,255,1) 90%)"></div>
</div>
<div class="b" style="left:4602.5px;top:2000.5px;width:89.0px;height:89.0px;background:#7EB5E9;border-radius:44.5px;"></div>
<svg style="left:4632px;top:2025px" width="30" height="40" viewBox="0 0 30 40"><path d="M9,9 L20,20 L9,31" fill="none" stroke="#4B3F75" stroke-width="2" stroke-linecap="round" stroke-linejoin="round"/></svg>
<script>(function(){var w=window.innerWidth;if(w&&Math.abs(w-4788)>2){document.body.style.zoom=(w/4788);}})();</script>
</body></html>
